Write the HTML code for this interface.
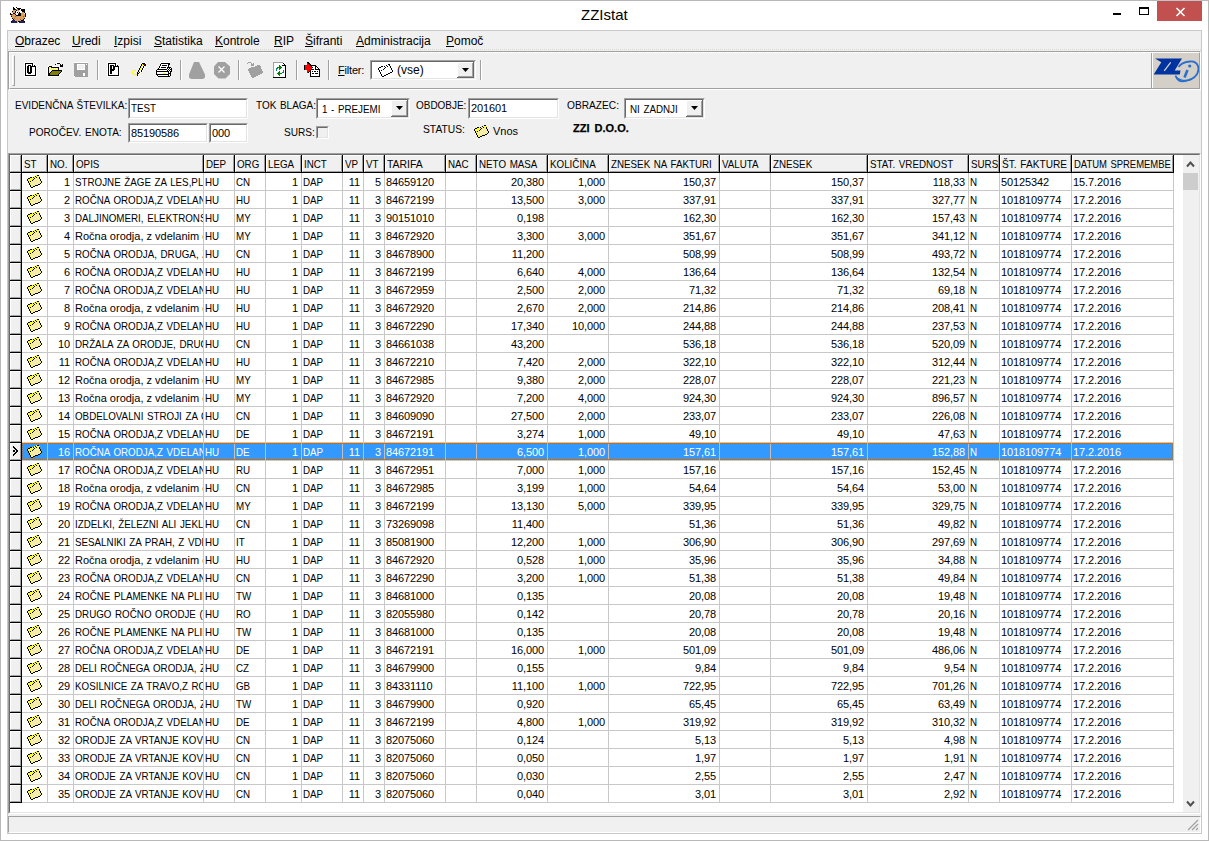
<!DOCTYPE html><html><head><meta charset="utf-8"><title>ZZIstat</title><style>
*{margin:0;padding:0;box-sizing:border-box}
html,body{width:1209px;height:841px;overflow:hidden;background:#fff}
body{position:relative;font-family:"Liberation Sans",sans-serif;font-size:11px;color:#000}
.a{position:absolute}
.t{position:absolute;white-space:nowrap;line-height:13px}
.cell{position:absolute;overflow:hidden;white-space:nowrap;height:17px;line-height:17px;font-size:11px}
.up{}
.sx{display:inline-block;transform:scaleX(.89);transform-origin:0 50%;word-spacing:1px}
.sxr{display:inline-block;transform:scaleX(.89);transform-origin:100% 50%;word-spacing:1px}
.num{letter-spacing:-0.1px}
.hd{position:absolute;background:#f0f0f0;border-left:1px solid #fff;border-top:1px solid #fff;border-right:1px solid #a0a0a0;border-bottom:1px solid #a0a0a0;overflow:hidden;white-space:nowrap;line-height:15px;font-size:11px}
.sunk{position:absolute;background:#fff;border-top:1px solid #a0a0a0;border-left:1px solid #a0a0a0;border-bottom:1px solid #fff;border-right:1px solid #fff}
.sunk>.in{position:absolute;left:0;top:0;right:0;bottom:0;border-top:1px solid #696969;border-left:1px solid #696969;border-bottom:1px solid #e3e3e3;border-right:1px solid #e3e3e3}
.u{text-decoration:underline}
</style></head><body><svg width="0" height="0" style="position:absolute"><defs><symbol id="fold" viewBox="0 0 22 17"><path d="M13 4h1v1h-1zM14 4h1v1h-1zM11 5h1v1h-1zM12 5h1v1h-1zM13 5h1v1h-1zM14 5h1v1h-1zM10 6h1v1h-1zM11 6h1v1h-1zM12 6h1v1h-1zM13 6h1v1h-1zM14 6h1v1h-1zM15 6h1v1h-1zM9 7h1v1h-1zM10 7h1v1h-1zM11 7h1v1h-1zM12 7h1v1h-1zM13 7h1v1h-1zM14 7h1v1h-1zM15 7h1v1h-1zM7 8h1v1h-1zM8 8h1v1h-1zM9 8h1v1h-1zM10 8h1v1h-1zM11 8h1v1h-1zM12 8h1v1h-1zM13 8h1v1h-1zM14 8h1v1h-1zM15 8h1v1h-1zM6 9h1v1h-1zM7 9h1v1h-1zM8 9h1v1h-1zM9 9h1v1h-1zM10 9h1v1h-1zM11 9h1v1h-1zM12 9h1v1h-1zM13 9h1v1h-1zM14 9h1v1h-1zM15 9h1v1h-1zM7 10h1v1h-1zM8 10h1v1h-1zM9 10h1v1h-1zM10 10h1v1h-1zM11 10h1v1h-1zM12 10h1v1h-1zM13 10h1v1h-1zM14 10h1v1h-1zM15 10h1v1h-1zM7 11h1v1h-1zM8 11h1v1h-1zM9 11h1v1h-1zM10 11h1v1h-1zM11 11h1v1h-1zM12 11h1v1h-1zM8 12h1v1h-1zM9 12h1v1h-1zM10 12h1v1h-1z" fill="#f4eca8"/><path d="M12 2h1v1h-1zM10 3h1v1h-1zM12 3h1v1h-1zM13 3h1v1h-1zM14 3h1v1h-1zM15 3h1v1h-1zM8 4h1v1h-1zM10 4h1v1h-1zM11 4h1v1h-1zM6 5h1v1h-1zM7 5h1v1h-1zM8 5h1v1h-1zM9 5h1v1h-1zM4 6h1v1h-1zM5 6h1v1h-1zM6 6h1v1h-1zM7 6h1v1h-1zM8 6h1v1h-1zM4 7h1v1h-1zM5 7h1v1h-1zM6 7h1v1h-1zM7 7h1v1h-1zM5 8h1v1h-1zM16 8h1v1h-1zM5 9h1v1h-1zM16 9h1v1h-1zM6 10h1v1h-1zM6 11h1v1h-1zM13 11h1v1h-1zM7 12h1v1h-1zM7 13h1v1h-1zM8 13h1v1h-1z" fill="#ffff30"/><path d="M13 2h1v1h-1zM14 2h1v1h-1zM11 3h1v1h-1zM6 4h1v1h-1zM7 4h1v1h-1zM9 4h1v1h-1zM12 4h1v1h-1zM15 4h1v1h-1zM4 5h1v1h-1zM5 5h1v1h-1zM10 5h1v1h-1zM15 5h1v1h-1zM3 6h1v1h-1zM9 6h1v1h-1zM16 6h1v1h-1zM3 7h1v1h-1zM8 7h1v1h-1zM16 7h1v1h-1zM4 8h1v1h-1zM6 8h1v1h-1zM17 8h1v1h-1zM4 9h1v1h-1zM17 9h1v1h-1zM5 10h1v1h-1zM16 10h1v1h-1zM5 11h1v1h-1zM14 11h1v1h-1zM15 11h1v1h-1zM6 12h1v1h-1zM11 12h1v1h-1zM12 12h1v1h-1zM13 12h1v1h-1zM6 13h1v1h-1zM9 13h1v1h-1zM10 13h1v1h-1zM7 14h1v1h-1zM8 14h1v1h-1z" fill="#000"/></symbol></defs></svg><div class="a" style="left:0;top:0;width:1209px;height:841px;border:1px solid #b8b8b8"></div><div class="a" style="left:1157px;top:0;width:45px;height:1px;background:#b8c8c8"></div><svg class="a" style="left:9px;top:6px" width="18" height="18" viewBox="0 0 18 18" shape-rendering="crispEdges"><rect x="4" y="1" width="1" height="1" fill="#000"/><rect x="7" y="1" width="1" height="1" fill="#000"/><rect x="4" y="2" width="1" height="1" fill="#000"/><rect x="5" y="2" width="1" height="1" fill="#000"/><rect x="7" y="2" width="1" height="1" fill="#fff"/><rect x="8" y="2" width="1" height="1" fill="#000"/><rect x="9" y="2" width="1" height="1" fill="#000"/><rect x="10" y="2" width="1" height="1" fill="#000"/><rect x="11" y="2" width="1" height="1" fill="#000"/><rect x="4" y="3" width="1" height="1" fill="#000"/><rect x="5" y="3" width="1" height="1" fill="#000"/><rect x="6" y="3" width="1" height="1" fill="#000"/><rect x="7" y="3" width="1" height="1" fill="#d8a060"/><rect x="8" y="3" width="1" height="1" fill="#d8a060"/><rect x="9" y="3" width="1" height="1" fill="#000"/><rect x="10" y="3" width="1" height="1" fill="#000"/><rect x="11" y="3" width="1" height="1" fill="#fff"/><rect x="12" y="3" width="1" height="1" fill="#000"/><rect x="13" y="3" width="1" height="1" fill="#000"/><rect x="14" y="3" width="1" height="1" fill="#000"/><rect x="15" y="3" width="1" height="1" fill="#000"/><rect x="4" y="4" width="1" height="1" fill="#d8a060"/><rect x="5" y="4" width="1" height="1" fill="#d8a060"/><rect x="6" y="4" width="1" height="1" fill="#d8a060"/><rect x="7" y="4" width="1" height="1" fill="#000"/><rect x="8" y="4" width="1" height="1" fill="#d8a060"/><rect x="9" y="4" width="1" height="1" fill="#d8a060"/><rect x="10" y="4" width="1" height="1" fill="#fff"/><rect x="11" y="4" width="1" height="1" fill="#fff"/><rect x="12" y="4" width="1" height="1" fill="#000"/><rect x="13" y="4" width="1" height="1" fill="#000"/><rect x="14" y="4" width="1" height="1" fill="#000"/><rect x="15" y="4" width="1" height="1" fill="#000"/><rect x="3" y="5" width="1" height="1" fill="#000"/><rect x="4" y="5" width="1" height="1" fill="#d8a060"/><rect x="5" y="5" width="1" height="1" fill="#d8a060"/><rect x="6" y="5" width="1" height="1" fill="#000"/><rect x="7" y="5" width="1" height="1" fill="#fff"/><rect x="8" y="5" width="1" height="1" fill="#fff"/><rect x="9" y="5" width="1" height="1" fill="#c8c8c8"/><rect x="10" y="5" width="1" height="1" fill="#fff"/><rect x="11" y="5" width="1" height="1" fill="#fff"/><rect x="13" y="5" width="1" height="1" fill="#000"/><rect x="14" y="5" width="1" height="1" fill="#000"/><rect x="15" y="5" width="1" height="1" fill="#000"/><rect x="3" y="6" width="1" height="1" fill="#d8a060"/><rect x="4" y="6" width="1" height="1" fill="#d8a060"/><rect x="5" y="6" width="1" height="1" fill="#d8a060"/><rect x="6" y="6" width="1" height="1" fill="#000"/><rect x="7" y="6" width="1" height="1" fill="#fff"/><rect x="8" y="6" width="1" height="1" fill="#000"/><rect x="9" y="6" width="1" height="1" fill="#fff"/><rect x="10" y="6" width="1" height="1" fill="#000"/><rect x="11" y="6" width="1" height="1" fill="#fff"/><rect x="12" y="6" width="1" height="1" fill="#fff"/><rect x="13" y="6" width="1" height="1" fill="#d8a060"/><rect x="14" y="6" width="1" height="1" fill="#d8a060"/><rect x="15" y="6" width="1" height="1" fill="#000"/><rect x="1" y="7" width="1" height="1" fill="#000"/><rect x="4" y="7" width="1" height="1" fill="#000"/><rect x="5" y="7" width="1" height="1" fill="#000"/><rect x="6" y="7" width="1" height="1" fill="#d8a060"/><rect x="7" y="7" width="1" height="1" fill="#fff"/><rect x="8" y="7" width="1" height="1" fill="#fff"/><rect x="9" y="7" width="1" height="1" fill="#a85a20"/><rect x="10" y="7" width="1" height="1" fill="#000"/><rect x="11" y="7" width="1" height="1" fill="#000"/><rect x="12" y="7" width="1" height="1" fill="#d8a060"/><rect x="13" y="7" width="1" height="1" fill="#d8a060"/><rect x="14" y="7" width="1" height="1" fill="#d8a060"/><rect x="16" y="7" width="1" height="1" fill="#000"/><rect x="1" y="8" width="1" height="1" fill="#000"/><rect x="2" y="8" width="1" height="1" fill="#000"/><rect x="3" y="8" width="1" height="1" fill="#a85a20"/><rect x="4" y="8" width="1" height="1" fill="#d8a060"/><rect x="5" y="8" width="1" height="1" fill="#d8a060"/><rect x="6" y="8" width="1" height="1" fill="#000"/><rect x="7" y="8" width="1" height="1" fill="#fff"/><rect x="8" y="8" width="1" height="1" fill="#fff"/><rect x="9" y="8" width="1" height="1" fill="#000"/><rect x="10" y="8" width="1" height="1" fill="#000"/><rect x="11" y="8" width="1" height="1" fill="#000"/><rect x="12" y="8" width="1" height="1" fill="#d8a060"/><rect x="13" y="8" width="1" height="1" fill="#d8a060"/><rect x="14" y="8" width="1" height="1" fill="#d8a060"/><rect x="15" y="8" width="1" height="1" fill="#d8a060"/><rect x="16" y="8" width="1" height="1" fill="#000"/><rect x="2" y="9" width="1" height="1" fill="#a85a20"/><rect x="3" y="9" width="1" height="1" fill="#d8a060"/><rect x="4" y="9" width="1" height="1" fill="#d8a060"/><rect x="5" y="9" width="1" height="1" fill="#d8a060"/><rect x="6" y="9" width="1" height="1" fill="#d8a060"/><rect x="7" y="9" width="1" height="1" fill="#000"/><rect x="8" y="9" width="1" height="1" fill="#000"/><rect x="9" y="9" width="1" height="1" fill="#000"/><rect x="10" y="9" width="1" height="1" fill="#000"/><rect x="11" y="9" width="1" height="1" fill="#000"/><rect x="12" y="9" width="1" height="1" fill="#d8a060"/><rect x="13" y="9" width="1" height="1" fill="#d8a060"/><rect x="14" y="9" width="1" height="1" fill="#d8a060"/><rect x="15" y="9" width="1" height="1" fill="#d8a060"/><rect x="16" y="9" width="1" height="1" fill="#000"/><rect x="2" y="10" width="1" height="1" fill="#000"/><rect x="3" y="10" width="1" height="1" fill="#d8a060"/><rect x="4" y="10" width="1" height="1" fill="#d8a060"/><rect x="5" y="10" width="1" height="1" fill="#d8a060"/><rect x="6" y="10" width="1" height="1" fill="#a85a20"/><rect x="7" y="10" width="1" height="1" fill="#d8a060"/><rect x="8" y="10" width="1" height="1" fill="#d8a060"/><rect x="9" y="10" width="1" height="1" fill="#d8a060"/><rect x="10" y="10" width="1" height="1" fill="#d8a060"/><rect x="11" y="10" width="1" height="1" fill="#d8a060"/><rect x="12" y="10" width="1" height="1" fill="#d8a060"/><rect x="13" y="10" width="1" height="1" fill="#d8a060"/><rect x="14" y="10" width="1" height="1" fill="#a85a20"/><rect x="15" y="10" width="1" height="1" fill="#d8a060"/><rect x="16" y="10" width="1" height="1" fill="#000"/><rect x="3" y="11" width="1" height="1" fill="#d8a060"/><rect x="4" y="11" width="1" height="1" fill="#d8a060"/><rect x="5" y="11" width="1" height="1" fill="#d8a060"/><rect x="6" y="11" width="1" height="1" fill="#d8a060"/><rect x="7" y="11" width="1" height="1" fill="#d8a060"/><rect x="8" y="11" width="1" height="1" fill="#d8a060"/><rect x="9" y="11" width="1" height="1" fill="#d8a060"/><rect x="10" y="11" width="1" height="1" fill="#d8a060"/><rect x="11" y="11" width="1" height="1" fill="#d8a060"/><rect x="12" y="11" width="1" height="1" fill="#d8a060"/><rect x="13" y="11" width="1" height="1" fill="#d8a060"/><rect x="14" y="11" width="1" height="1" fill="#d8a060"/><rect x="15" y="11" width="1" height="1" fill="#d8a060"/><rect x="3" y="12" width="1" height="1" fill="#000"/><rect x="4" y="12" width="1" height="1" fill="#d8a060"/><rect x="5" y="12" width="1" height="1" fill="#a85a20"/><rect x="6" y="12" width="1" height="1" fill="#d8a060"/><rect x="7" y="12" width="1" height="1" fill="#d8a060"/><rect x="8" y="12" width="1" height="1" fill="#d8a060"/><rect x="9" y="12" width="1" height="1" fill="#d8a060"/><rect x="10" y="12" width="1" height="1" fill="#d8a060"/><rect x="11" y="12" width="1" height="1" fill="#d8a060"/><rect x="12" y="12" width="1" height="1" fill="#d8a060"/><rect x="13" y="12" width="1" height="1" fill="#d8a060"/><rect x="14" y="12" width="1" height="1" fill="#d8a060"/><rect x="15" y="12" width="1" height="1" fill="#000"/><rect x="4" y="13" width="1" height="1" fill="#000"/><rect x="5" y="13" width="1" height="1" fill="#d8a060"/><rect x="6" y="13" width="1" height="1" fill="#d8a060"/><rect x="7" y="13" width="1" height="1" fill="#d8a060"/><rect x="8" y="13" width="1" height="1" fill="#d8a060"/><rect x="9" y="13" width="1" height="1" fill="#d8a060"/><rect x="10" y="13" width="1" height="1" fill="#d8a060"/><rect x="11" y="13" width="1" height="1" fill="#a85a20"/><rect x="12" y="13" width="1" height="1" fill="#d8a060"/><rect x="13" y="13" width="1" height="1" fill="#d8a060"/><rect x="14" y="13" width="1" height="1" fill="#000"/><rect x="3" y="14" width="1" height="1" fill="#20205a"/><rect x="4" y="14" width="1" height="1" fill="#20205a"/><rect x="5" y="14" width="1" height="1" fill="#20205a"/><rect x="6" y="14" width="1" height="1" fill="#d8a060"/><rect x="7" y="14" width="1" height="1" fill="#d8a060"/><rect x="8" y="14" width="1" height="1" fill="#d8a060"/><rect x="9" y="14" width="1" height="1" fill="#d8a060"/><rect x="10" y="14" width="1" height="1" fill="#d8a060"/><rect x="11" y="14" width="1" height="1" fill="#d8a060"/><rect x="12" y="14" width="1" height="1" fill="#000"/><rect x="13" y="14" width="1" height="1" fill="#000"/><rect x="14" y="14" width="1" height="1" fill="#20205a"/><rect x="2" y="15" width="1" height="1" fill="#000"/><rect x="3" y="15" width="1" height="1" fill="#20205a"/><rect x="4" y="15" width="1" height="1" fill="#20205a"/><rect x="5" y="15" width="1" height="1" fill="#20205a"/><rect x="6" y="15" width="1" height="1" fill="#20205a"/><rect x="7" y="15" width="1" height="1" fill="#20205a"/><rect x="8" y="15" width="1" height="1" fill="#f0b050"/><rect x="9" y="15" width="1" height="1" fill="#000"/><rect x="10" y="15" width="1" height="1" fill="#000"/><rect x="11" y="15" width="1" height="1" fill="#20205a"/><rect x="12" y="15" width="1" height="1" fill="#20205a"/><rect x="13" y="15" width="1" height="1" fill="#20205a"/><rect x="14" y="15" width="1" height="1" fill="#20205a"/><rect x="15" y="15" width="1" height="1" fill="#000"/><rect x="2" y="16" width="1" height="1" fill="#20205a"/><rect x="3" y="16" width="1" height="1" fill="#20205a"/><rect x="4" y="16" width="1" height="1" fill="#20205a"/><rect x="5" y="16" width="1" height="1" fill="#20205a"/><rect x="6" y="16" width="1" height="1" fill="#20205a"/><rect x="7" y="16" width="1" height="1" fill="#20205a"/><rect x="8" y="16" width="1" height="1" fill="#f0b050"/><rect x="10" y="16" width="1" height="1" fill="#20205a"/><rect x="11" y="16" width="1" height="1" fill="#20205a"/><rect x="12" y="16" width="1" height="1" fill="#20205a"/><rect x="13" y="16" width="1" height="1" fill="#20205a"/><rect x="14" y="16" width="1" height="1" fill="#20205a"/><rect x="15" y="16" width="1" height="1" fill="#20205a"/></svg><div class="t" style="left:581px;top:6px;font-size:15px;line-height:18px;color:#000">ZZIstat</div><div class="a" style="left:1113px;top:13px;width:8px;height:2px;background:#000"></div><div class="a" style="left:1139px;top:7px;width:10px;height:8px;border:1px solid #000;border-top-width:2px"></div><div class="a" style="left:1157px;top:1px;width:45px;height:20px;background:#c1504f"></div><svg class="a" style="left:1175px;top:7px" width="11" height="10" viewBox="0 0 11 10"><path d="M1.5 1L9.5 9M9.5 1L1.5 9" stroke="#fff" stroke-width="1.6"/></svg><div class="a" style="left:7px;top:30px;width:1195px;height:804px;background:#f0f0f0;border:1px solid #c8c8c8"></div><div class="t" style="left:15px;top:34px;font-size:12px;line-height:14px"><span class="u">O</span>brazec</div><div class="t" style="left:72px;top:34px;font-size:12px;line-height:14px"><span class="u">U</span>redi</div><div class="t" style="left:114px;top:34px;font-size:12px;line-height:14px"><span class="u">I</span>zpisi</div><div class="t" style="left:154px;top:34px;font-size:12px;line-height:14px"><span class="u">S</span>tatistika</div><div class="t" style="left:215px;top:34px;font-size:12px;line-height:14px"><span class="u">K</span>ontrole</div><div class="t" style="left:274px;top:34px;font-size:12px;line-height:14px"><span class="u">R</span>IP</div><div class="t" style="left:305px;top:34px;font-size:12px;line-height:14px"><span class="u">Š</span>ifranti</div><div class="t" style="left:356px;top:34px;font-size:12px;line-height:14px"><span class="u">A</span>dministracija</div><div class="t" style="left:446px;top:34px;font-size:12px;line-height:14px"><span class="u">P</span>omoč</div><div class="a" style="left:8px;top:49px;width:1193px;height:1px;border-top:1px dotted #d8d8d0"></div><div class="a" style="left:8px;top:51px;width:1193px;height:39px;border-top:1px solid #a0a0a0;border-left:1px solid #a0a0a0;border-bottom:1px solid #fff;border-right:1px solid #fff"></div><div class="a" style="left:9px;top:52px;width:1191px;height:37px;border-top:1px solid #fff;border-left:1px solid #fff;border-bottom:1px solid #a0a0a0;border-right:1px solid #a0a0a0"></div><div class="a" style="left:12px;top:55px;width:3px;height:31px;border-left:1px solid #fff;border-top:1px solid #fff;border-right:1px solid #a0a0a0;border-bottom:1px solid #a0a0a0"></div><div class="a" style="left:97px;top:60px;width:1px;height:20px;background:#a0a0a0;box-shadow:1px 0 0 #fff"></div><div class="a" style="left:180px;top:60px;width:1px;height:20px;background:#a0a0a0;box-shadow:1px 0 0 #fff"></div><div class="a" style="left:238px;top:60px;width:1px;height:20px;background:#a0a0a0;box-shadow:1px 0 0 #fff"></div><div class="a" style="left:296px;top:60px;width:1px;height:20px;background:#a0a0a0;box-shadow:1px 0 0 #fff"></div><div class="a" style="left:328px;top:60px;width:1px;height:20px;background:#a0a0a0;box-shadow:1px 0 0 #fff"></div><div class="a" style="left:480px;top:60px;width:1px;height:20px;background:#a0a0a0;box-shadow:1px 0 0 #fff"></div><svg class="a" style="left:23px;top:60px" width="16" height="17" viewBox="0 0 16 17" shape-rendering="crispEdges"><path d="M2 3h1v1h-1zM3 3h1v1h-1zM4 3h1v1h-1zM5 3h1v1h-1zM6 3h1v1h-1zM7 3h1v1h-1zM8 3h1v1h-1zM9 3h1v1h-1zM2 4h1v1h-1zM9 4h1v1h-1zM2 5h1v1h-1zM5 5h1v1h-1zM6 5h1v1h-1zM7 5h1v1h-1zM9 5h1v1h-1zM11 5h1v1h-1zM2 6h1v1h-1zM4 6h1v1h-1zM5 6h1v1h-1zM7 6h1v1h-1zM8 6h1v1h-1zM9 6h1v1h-1zM10 6h1v1h-1zM11 6h1v1h-1zM12 6h1v1h-1zM2 7h1v1h-1zM4 7h1v1h-1zM5 7h1v1h-1zM7 7h1v1h-1zM8 7h1v1h-1zM12 7h1v1h-1zM2 8h1v1h-1zM4 8h1v1h-1zM5 8h1v1h-1zM7 8h1v1h-1zM8 8h1v1h-1zM12 8h1v1h-1zM2 9h1v1h-1zM4 9h1v1h-1zM5 9h1v1h-1zM7 9h1v1h-1zM8 9h1v1h-1zM12 9h1v1h-1zM2 10h1v1h-1zM4 10h1v1h-1zM5 10h1v1h-1zM7 10h1v1h-1zM8 10h1v1h-1zM12 10h1v1h-1zM2 11h1v1h-1zM4 11h1v1h-1zM5 11h1v1h-1zM7 11h1v1h-1zM8 11h1v1h-1zM12 11h1v1h-1zM2 12h1v1h-1zM4 12h1v1h-1zM5 12h1v1h-1zM6 12h1v1h-1zM7 12h1v1h-1zM8 12h1v1h-1zM12 12h1v1h-1zM2 13h1v1h-1zM5 13h1v1h-1zM6 13h1v1h-1zM7 13h1v1h-1zM12 13h1v1h-1zM2 14h1v1h-1zM12 14h1v1h-1zM2 15h1v1h-1zM3 15h1v1h-1zM4 15h1v1h-1zM5 15h1v1h-1zM6 15h1v1h-1zM7 15h1v1h-1zM8 15h1v1h-1zM9 15h1v1h-1zM10 15h1v1h-1zM11 15h1v1h-1zM12 15h1v1h-1z" fill="#000"/><path d="M1 2h1v1h-1zM2 2h1v1h-1zM3 2h1v1h-1zM4 2h1v1h-1zM5 2h1v1h-1zM6 2h1v1h-1zM7 2h1v1h-1zM8 2h1v1h-1zM9 2h1v1h-1zM1 3h1v1h-1zM10 3h1v1h-1zM1 4h1v1h-1zM3 4h1v1h-1zM4 4h1v1h-1zM5 4h1v1h-1zM6 4h1v1h-1zM7 4h1v1h-1zM8 4h1v1h-1zM10 4h1v1h-1zM11 4h1v1h-1zM1 5h1v1h-1zM3 5h1v1h-1zM4 5h1v1h-1zM8 5h1v1h-1zM10 5h1v1h-1zM12 5h1v1h-1zM1 6h1v1h-1zM3 6h1v1h-1zM6 6h1v1h-1zM13 6h1v1h-1zM1 7h1v1h-1zM3 7h1v1h-1zM6 7h1v1h-1zM9 7h1v1h-1zM10 7h1v1h-1zM11 7h1v1h-1zM13 7h1v1h-1zM1 8h1v1h-1zM3 8h1v1h-1zM6 8h1v1h-1zM9 8h1v1h-1zM10 8h1v1h-1zM11 8h1v1h-1zM13 8h1v1h-1zM1 9h1v1h-1zM3 9h1v1h-1zM6 9h1v1h-1zM9 9h1v1h-1zM10 9h1v1h-1zM11 9h1v1h-1zM13 9h1v1h-1zM1 10h1v1h-1zM3 10h1v1h-1zM6 10h1v1h-1zM9 10h1v1h-1zM10 10h1v1h-1zM11 10h1v1h-1zM13 10h1v1h-1zM1 11h1v1h-1zM3 11h1v1h-1zM6 11h1v1h-1zM9 11h1v1h-1zM10 11h1v1h-1zM11 11h1v1h-1zM13 11h1v1h-1zM1 12h1v1h-1zM3 12h1v1h-1zM9 12h1v1h-1zM10 12h1v1h-1zM11 12h1v1h-1zM13 12h1v1h-1zM1 13h1v1h-1zM3 13h1v1h-1zM4 13h1v1h-1zM8 13h1v1h-1zM9 13h1v1h-1zM10 13h1v1h-1zM11 13h1v1h-1zM13 13h1v1h-1zM1 14h1v1h-1zM3 14h1v1h-1zM4 14h1v1h-1zM5 14h1v1h-1zM6 14h1v1h-1zM7 14h1v1h-1zM8 14h1v1h-1zM9 14h1v1h-1zM10 14h1v1h-1zM11 14h1v1h-1zM13 14h1v1h-1zM1 15h1v1h-1zM13 15h1v1h-1zM1 16h1v1h-1zM2 16h1v1h-1zM3 16h1v1h-1zM4 16h1v1h-1zM5 16h1v1h-1zM6 16h1v1h-1zM7 16h1v1h-1zM8 16h1v1h-1zM9 16h1v1h-1zM10 16h1v1h-1zM11 16h1v1h-1zM12 16h1v1h-1zM13 16h1v1h-1z" fill="#fff"/></svg><svg class="a" style="left:46px;top:60px" width="18" height="17" viewBox="0 0 18 17" shape-rendering="crispEdges"><path d="M11 3h1v1h-1zM12 3h1v1h-1zM13 3h1v1h-1zM9 4h1v1h-1zM14 4h1v1h-1zM16 4h1v1h-1zM14 5h1v1h-1zM15 5h1v1h-1zM16 5h1v1h-1zM3 6h1v1h-1zM4 6h1v1h-1zM5 6h1v1h-1zM14 6h1v1h-1zM15 6h1v1h-1zM16 6h1v1h-1zM2 7h1v1h-1zM5 7h1v1h-1zM6 7h1v1h-1zM7 7h1v1h-1zM8 7h1v1h-1zM9 7h1v1h-1zM10 7h1v1h-1zM11 7h1v1h-1zM12 7h1v1h-1zM2 8h1v1h-1zM12 8h1v1h-1zM2 9h1v1h-1zM12 9h1v1h-1zM2 10h1v1h-1zM6 10h1v1h-1zM7 10h1v1h-1zM8 10h1v1h-1zM9 10h1v1h-1zM10 10h1v1h-1zM11 10h1v1h-1zM12 10h1v1h-1zM13 10h1v1h-1zM14 10h1v1h-1zM15 10h1v1h-1zM2 11h1v1h-1zM5 11h1v1h-1zM15 11h1v1h-1zM2 12h1v1h-1zM4 12h1v1h-1zM14 12h1v1h-1zM2 13h1v1h-1zM3 13h1v1h-1zM13 13h1v1h-1zM2 14h1v1h-1zM3 14h1v1h-1zM12 14h1v1h-1zM2 15h1v1h-1zM3 15h1v1h-1zM4 15h1v1h-1zM5 15h1v1h-1zM6 15h1v1h-1zM7 15h1v1h-1zM8 15h1v1h-1zM9 15h1v1h-1zM10 15h1v1h-1zM11 15h1v1h-1zM12 15h1v1h-1z" fill="#000"/><path d="M10 2h1v1h-1zM11 2h1v1h-1zM12 2h1v1h-1zM13 2h1v1h-1zM10 3h1v1h-1zM14 3h1v1h-1zM10 4h1v1h-1zM15 4h1v1h-1zM2 5h1v1h-1zM3 5h1v1h-1zM4 5h1v1h-1zM2 6h1v1h-1zM6 6h1v1h-1zM7 6h1v1h-1zM8 6h1v1h-1zM9 6h1v1h-1zM10 6h1v1h-1zM11 6h1v1h-1zM1 7h1v1h-1zM13 7h1v1h-1zM1 8h1v1h-1zM4 8h1v1h-1zM6 8h1v1h-1zM8 8h1v1h-1zM10 8h1v1h-1zM13 8h1v1h-1zM1 9h1v1h-1zM3 9h1v1h-1zM5 9h1v1h-1zM7 9h1v1h-1zM9 9h1v1h-1zM11 9h1v1h-1zM13 9h1v1h-1zM1 10h1v1h-1zM4 10h1v1h-1zM16 10h1v1h-1zM1 11h1v1h-1zM4 11h1v1h-1zM16 11h1v1h-1zM1 12h1v1h-1zM15 12h1v1h-1zM1 13h1v1h-1zM14 13h1v1h-1zM1 14h1v1h-1zM13 14h1v1h-1zM1 15h1v1h-1zM13 15h1v1h-1zM2 16h1v1h-1zM3 16h1v1h-1zM4 16h1v1h-1zM5 16h1v1h-1zM6 16h1v1h-1zM7 16h1v1h-1zM8 16h1v1h-1zM9 16h1v1h-1zM10 16h1v1h-1zM11 16h1v1h-1zM12 16h1v1h-1z" fill="#fff"/><path d="M3 7h1v1h-1zM4 7h1v1h-1zM3 8h1v1h-1zM5 8h1v1h-1zM7 8h1v1h-1zM9 8h1v1h-1zM11 8h1v1h-1zM4 9h1v1h-1zM6 9h1v1h-1zM8 9h1v1h-1zM10 9h1v1h-1zM3 10h1v1h-1zM5 10h1v1h-1zM3 11h1v1h-1zM3 12h1v1h-1z" fill="#ffff00"/><path d="M6 11h1v1h-1zM7 11h1v1h-1zM8 11h1v1h-1zM9 11h1v1h-1zM10 11h1v1h-1zM11 11h1v1h-1zM12 11h1v1h-1zM13 11h1v1h-1zM14 11h1v1h-1zM5 12h1v1h-1zM6 12h1v1h-1zM7 12h1v1h-1zM8 12h1v1h-1zM9 12h1v1h-1zM10 12h1v1h-1zM11 12h1v1h-1zM12 12h1v1h-1zM13 12h1v1h-1zM4 13h1v1h-1zM5 13h1v1h-1zM6 13h1v1h-1zM7 13h1v1h-1zM8 13h1v1h-1zM9 13h1v1h-1zM10 13h1v1h-1zM11 13h1v1h-1zM12 13h1v1h-1zM4 14h1v1h-1zM5 14h1v1h-1zM6 14h1v1h-1zM7 14h1v1h-1zM8 14h1v1h-1zM9 14h1v1h-1zM10 14h1v1h-1zM11 14h1v1h-1z" fill="#808000"/></svg><svg class="a" style="left:72px;top:60px" width="18" height="17" viewBox="0 0 18 17" shape-rendering="crispEdges"><path d="M2 2h1v1h-1zM3 2h1v1h-1zM4 2h1v1h-1zM5 2h1v1h-1zM6 2h1v1h-1zM7 2h1v1h-1zM8 2h1v1h-1zM9 2h1v1h-1zM10 2h1v1h-1zM11 2h1v1h-1zM12 2h1v1h-1zM13 2h1v1h-1zM14 2h1v1h-1zM15 2h1v1h-1zM5 4h1v1h-1zM6 4h1v1h-1zM7 4h1v1h-1zM8 4h1v1h-1zM9 4h1v1h-1zM10 4h1v1h-1zM11 4h1v1h-1zM12 4h1v1h-1zM14 4h1v1h-1zM5 5h1v1h-1zM12 5h1v1h-1zM5 6h1v1h-1zM12 6h1v1h-1zM5 7h1v1h-1zM12 7h1v1h-1zM5 8h1v1h-1zM12 8h1v1h-1zM5 9h1v1h-1zM6 9h1v1h-1zM7 9h1v1h-1zM8 9h1v1h-1zM9 9h1v1h-1zM10 9h1v1h-1zM11 9h1v1h-1zM12 9h1v1h-1zM11 13h1v1h-1zM12 13h1v1h-1zM11 14h1v1h-1zM12 14h1v1h-1zM11 15h1v1h-1zM12 15h1v1h-1zM2 16h1v1h-1z" fill="#fff"/><path d="M2 3h1v1h-1zM3 3h1v1h-1zM4 3h1v1h-1zM5 3h1v1h-1zM6 3h1v1h-1zM7 3h1v1h-1zM8 3h1v1h-1zM9 3h1v1h-1zM10 3h1v1h-1zM11 3h1v1h-1zM12 3h1v1h-1zM13 3h1v1h-1zM14 3h1v1h-1zM15 3h1v1h-1zM2 4h1v1h-1zM3 4h1v1h-1zM4 4h1v1h-1zM13 4h1v1h-1zM15 4h1v1h-1zM2 5h1v1h-1zM3 5h1v1h-1zM4 5h1v1h-1zM13 5h1v1h-1zM14 5h1v1h-1zM15 5h1v1h-1zM2 6h1v1h-1zM3 6h1v1h-1zM4 6h1v1h-1zM13 6h1v1h-1zM14 6h1v1h-1zM15 6h1v1h-1zM2 7h1v1h-1zM3 7h1v1h-1zM4 7h1v1h-1zM13 7h1v1h-1zM14 7h1v1h-1zM15 7h1v1h-1zM2 8h1v1h-1zM3 8h1v1h-1zM4 8h1v1h-1zM13 8h1v1h-1zM14 8h1v1h-1zM15 8h1v1h-1zM2 9h1v1h-1zM3 9h1v1h-1zM4 9h1v1h-1zM13 9h1v1h-1zM14 9h1v1h-1zM15 9h1v1h-1zM2 10h1v1h-1zM3 10h1v1h-1zM4 10h1v1h-1zM5 10h1v1h-1zM6 10h1v1h-1zM7 10h1v1h-1zM8 10h1v1h-1zM9 10h1v1h-1zM10 10h1v1h-1zM11 10h1v1h-1zM12 10h1v1h-1zM13 10h1v1h-1zM14 10h1v1h-1zM15 10h1v1h-1zM2 11h1v1h-1zM3 11h1v1h-1zM4 11h1v1h-1zM5 11h1v1h-1zM6 11h1v1h-1zM7 11h1v1h-1zM8 11h1v1h-1zM9 11h1v1h-1zM10 11h1v1h-1zM11 11h1v1h-1zM12 11h1v1h-1zM13 11h1v1h-1zM14 11h1v1h-1zM15 11h1v1h-1zM2 12h1v1h-1zM3 12h1v1h-1zM4 12h1v1h-1zM5 12h1v1h-1zM6 12h1v1h-1zM7 12h1v1h-1zM8 12h1v1h-1zM9 12h1v1h-1zM10 12h1v1h-1zM11 12h1v1h-1zM12 12h1v1h-1zM13 12h1v1h-1zM14 12h1v1h-1zM15 12h1v1h-1zM2 13h1v1h-1zM3 13h1v1h-1zM4 13h1v1h-1zM5 13h1v1h-1zM6 13h1v1h-1zM7 13h1v1h-1zM8 13h1v1h-1zM9 13h1v1h-1zM10 13h1v1h-1zM13 13h1v1h-1zM14 13h1v1h-1zM15 13h1v1h-1zM2 14h1v1h-1zM3 14h1v1h-1zM4 14h1v1h-1zM5 14h1v1h-1zM6 14h1v1h-1zM7 14h1v1h-1zM8 14h1v1h-1zM9 14h1v1h-1zM10 14h1v1h-1zM13 14h1v1h-1zM14 14h1v1h-1zM15 14h1v1h-1zM2 15h1v1h-1zM3 15h1v1h-1zM4 15h1v1h-1zM5 15h1v1h-1zM6 15h1v1h-1zM7 15h1v1h-1zM8 15h1v1h-1zM9 15h1v1h-1zM10 15h1v1h-1zM13 15h1v1h-1zM14 15h1v1h-1zM15 15h1v1h-1zM3 16h1v1h-1zM4 16h1v1h-1zM5 16h1v1h-1zM6 16h1v1h-1zM7 16h1v1h-1zM8 16h1v1h-1zM9 16h1v1h-1zM10 16h1v1h-1zM11 16h1v1h-1zM12 16h1v1h-1zM13 16h1v1h-1zM14 16h1v1h-1zM15 16h1v1h-1z" fill="#a0a0a0"/><path d="M6 5h1v1h-1zM7 5h1v1h-1zM8 5h1v1h-1zM9 5h1v1h-1zM10 5h1v1h-1zM11 5h1v1h-1zM6 6h1v1h-1zM7 6h1v1h-1zM8 6h1v1h-1zM9 6h1v1h-1zM10 6h1v1h-1zM11 6h1v1h-1zM6 7h1v1h-1zM7 7h1v1h-1zM8 7h1v1h-1zM9 7h1v1h-1zM10 7h1v1h-1zM11 7h1v1h-1zM6 8h1v1h-1zM7 8h1v1h-1zM8 8h1v1h-1zM9 8h1v1h-1zM10 8h1v1h-1zM11 8h1v1h-1z" fill="#f0f0f0"/></svg><svg class="a" style="left:106px;top:60px" width="16" height="17" viewBox="0 0 16 17" shape-rendering="crispEdges"><path d="M2 3h1v1h-1zM3 3h1v1h-1zM4 3h1v1h-1zM5 3h1v1h-1zM6 3h1v1h-1zM7 3h1v1h-1zM8 3h1v1h-1zM9 3h1v1h-1zM2 4h1v1h-1zM9 4h1v1h-1zM2 5h1v1h-1zM4 5h1v1h-1zM5 5h1v1h-1zM6 5h1v1h-1zM7 5h1v1h-1zM9 5h1v1h-1zM11 5h1v1h-1zM2 6h1v1h-1zM4 6h1v1h-1zM5 6h1v1h-1zM7 6h1v1h-1zM8 6h1v1h-1zM9 6h1v1h-1zM10 6h1v1h-1zM11 6h1v1h-1zM12 6h1v1h-1zM2 7h1v1h-1zM4 7h1v1h-1zM5 7h1v1h-1zM7 7h1v1h-1zM8 7h1v1h-1zM12 7h1v1h-1zM2 8h1v1h-1zM4 8h1v1h-1zM5 8h1v1h-1zM7 8h1v1h-1zM8 8h1v1h-1zM12 8h1v1h-1zM2 9h1v1h-1zM4 9h1v1h-1zM5 9h1v1h-1zM6 9h1v1h-1zM7 9h1v1h-1zM8 9h1v1h-1zM12 9h1v1h-1zM2 10h1v1h-1zM4 10h1v1h-1zM5 10h1v1h-1zM6 10h1v1h-1zM7 10h1v1h-1zM12 10h1v1h-1zM2 11h1v1h-1zM4 11h1v1h-1zM5 11h1v1h-1zM12 11h1v1h-1zM2 12h1v1h-1zM4 12h1v1h-1zM5 12h1v1h-1zM12 12h1v1h-1zM2 13h1v1h-1zM4 13h1v1h-1zM5 13h1v1h-1zM12 13h1v1h-1zM2 14h1v1h-1zM12 14h1v1h-1zM2 15h1v1h-1zM3 15h1v1h-1zM4 15h1v1h-1zM5 15h1v1h-1zM6 15h1v1h-1zM7 15h1v1h-1zM8 15h1v1h-1zM9 15h1v1h-1zM10 15h1v1h-1zM11 15h1v1h-1zM12 15h1v1h-1z" fill="#000"/><path d="M1 2h1v1h-1zM2 2h1v1h-1zM3 2h1v1h-1zM4 2h1v1h-1zM5 2h1v1h-1zM6 2h1v1h-1zM7 2h1v1h-1zM8 2h1v1h-1zM9 2h1v1h-1zM1 3h1v1h-1zM10 3h1v1h-1zM1 4h1v1h-1zM3 4h1v1h-1zM4 4h1v1h-1zM5 4h1v1h-1zM6 4h1v1h-1zM7 4h1v1h-1zM8 4h1v1h-1zM10 4h1v1h-1zM11 4h1v1h-1zM1 5h1v1h-1zM3 5h1v1h-1zM8 5h1v1h-1zM10 5h1v1h-1zM12 5h1v1h-1zM1 6h1v1h-1zM3 6h1v1h-1zM6 6h1v1h-1zM13 6h1v1h-1zM1 7h1v1h-1zM3 7h1v1h-1zM6 7h1v1h-1zM9 7h1v1h-1zM10 7h1v1h-1zM11 7h1v1h-1zM13 7h1v1h-1zM1 8h1v1h-1zM3 8h1v1h-1zM6 8h1v1h-1zM9 8h1v1h-1zM10 8h1v1h-1zM11 8h1v1h-1zM13 8h1v1h-1zM1 9h1v1h-1zM3 9h1v1h-1zM9 9h1v1h-1zM10 9h1v1h-1zM11 9h1v1h-1zM13 9h1v1h-1zM1 10h1v1h-1zM3 10h1v1h-1zM8 10h1v1h-1zM9 10h1v1h-1zM10 10h1v1h-1zM11 10h1v1h-1zM13 10h1v1h-1zM1 11h1v1h-1zM3 11h1v1h-1zM6 11h1v1h-1zM7 11h1v1h-1zM8 11h1v1h-1zM9 11h1v1h-1zM10 11h1v1h-1zM11 11h1v1h-1zM13 11h1v1h-1zM1 12h1v1h-1zM3 12h1v1h-1zM6 12h1v1h-1zM7 12h1v1h-1zM8 12h1v1h-1zM9 12h1v1h-1zM10 12h1v1h-1zM11 12h1v1h-1zM13 12h1v1h-1zM1 13h1v1h-1zM3 13h1v1h-1zM6 13h1v1h-1zM7 13h1v1h-1zM8 13h1v1h-1zM9 13h1v1h-1zM10 13h1v1h-1zM11 13h1v1h-1zM13 13h1v1h-1zM1 14h1v1h-1zM3 14h1v1h-1zM4 14h1v1h-1zM5 14h1v1h-1zM6 14h1v1h-1zM7 14h1v1h-1zM8 14h1v1h-1zM9 14h1v1h-1zM10 14h1v1h-1zM11 14h1v1h-1zM13 14h1v1h-1zM1 15h1v1h-1zM13 15h1v1h-1zM1 16h1v1h-1zM2 16h1v1h-1zM3 16h1v1h-1zM4 16h1v1h-1zM5 16h1v1h-1zM6 16h1v1h-1zM7 16h1v1h-1zM8 16h1v1h-1zM9 16h1v1h-1zM10 16h1v1h-1zM11 16h1v1h-1zM12 16h1v1h-1zM13 16h1v1h-1z" fill="#fff"/></svg><svg class="a" style="left:130px;top:60px" width="19" height="16" viewBox="0 0 19 16" shape-rendering="crispEdges"><path d="M12 3h1v1h-1zM13 3h1v1h-1zM14 3h1v1h-1zM11 4h1v1h-1zM15 4h1v1h-1zM11 5h1v1h-1zM14 5h1v1h-1zM15 5h1v1h-1zM10 6h1v1h-1zM13 6h1v1h-1zM10 7h1v1h-1zM13 7h1v1h-1zM9 8h1v1h-1zM12 8h1v1h-1zM9 9h1v1h-1zM12 9h1v1h-1zM8 10h1v1h-1zM11 10h1v1h-1zM8 11h1v1h-1zM11 11h1v1h-1zM7 12h1v1h-1zM9 12h1v1h-1zM7 13h1v1h-1zM8 13h1v1h-1zM7 14h1v1h-1zM7 15h1v1h-1z" fill="#000"/><path d="M12 2h1v1h-1zM13 2h1v1h-1zM14 2h1v1h-1zM15 2h1v1h-1zM11 3h1v1h-1zM15 3h1v1h-1zM10 4h1v1h-1zM16 4h1v1h-1zM10 5h1v1h-1zM13 5h1v1h-1zM16 5h1v1h-1zM9 6h1v1h-1zM12 6h1v1h-1zM14 6h1v1h-1zM9 7h1v1h-1zM12 7h1v1h-1zM14 7h1v1h-1zM11 8h1v1h-1zM13 8h1v1h-1zM8 9h1v1h-1zM11 9h1v1h-1zM13 9h1v1h-1zM10 10h1v1h-1zM12 10h1v1h-1zM10 11h1v1h-1zM12 11h1v1h-1zM10 12h1v1h-1zM9 13h1v1h-1zM8 14h1v1h-1z" fill="#fff"/><path d="M12 4h1v1h-1zM12 5h1v1h-1zM11 6h1v1h-1zM11 7h1v1h-1zM10 8h1v1h-1zM10 9h1v1h-1zM3 10h1v1h-1zM4 10h1v1h-1zM5 10h1v1h-1zM9 10h1v1h-1zM2 11h1v1h-1zM9 11h1v1h-1zM2 12h1v1h-1zM8 12h1v1h-1zM2 13h1v1h-1zM3 14h1v1h-1zM4 14h1v1h-1zM5 14h1v1h-1zM6 14h1v1h-1z" fill="#ffff00"/><path d="M13 4h1v1h-1zM14 4h1v1h-1z" fill="#800000"/></svg><svg class="a" style="left:154px;top:60px" width="20" height="17" viewBox="0 0 20 17" shape-rendering="crispEdges"><path d="M7 3h1v1h-1zM8 3h1v1h-1zM9 3h1v1h-1zM10 3h1v1h-1zM11 3h1v1h-1zM12 3h1v1h-1zM13 3h1v1h-1zM14 3h1v1h-1zM15 3h1v1h-1zM6 4h1v1h-1zM14 4h1v1h-1zM15 4h1v1h-1zM6 5h1v1h-1zM8 5h1v1h-1zM9 5h1v1h-1zM10 5h1v1h-1zM11 5h1v1h-1zM12 5h1v1h-1zM14 5h1v1h-1zM5 6h1v1h-1zM14 6h1v1h-1zM5 7h1v1h-1zM7 7h1v1h-1zM8 7h1v1h-1zM9 7h1v1h-1zM10 7h1v1h-1zM11 7h1v1h-1zM13 7h1v1h-1zM14 7h1v1h-1zM15 7h1v1h-1zM16 7h1v1h-1zM4 8h1v1h-1zM13 8h1v1h-1zM15 8h1v1h-1zM17 8h1v1h-1zM3 9h1v1h-1zM4 9h1v1h-1zM5 9h1v1h-1zM6 9h1v1h-1zM7 9h1v1h-1zM8 9h1v1h-1zM9 9h1v1h-1zM10 9h1v1h-1zM11 9h1v1h-1zM12 9h1v1h-1zM14 9h1v1h-1zM16 9h1v1h-1zM17 9h1v1h-1zM2 10h1v1h-1zM13 10h1v1h-1zM15 10h1v1h-1zM17 10h1v1h-1zM2 11h1v1h-1zM3 11h1v1h-1zM4 11h1v1h-1zM5 11h1v1h-1zM6 11h1v1h-1zM7 11h1v1h-1zM8 11h1v1h-1zM9 11h1v1h-1zM10 11h1v1h-1zM11 11h1v1h-1zM12 11h1v1h-1zM13 11h1v1h-1zM14 11h1v1h-1zM16 11h1v1h-1zM17 11h1v1h-1zM2 12h1v1h-1zM14 12h1v1h-1zM16 12h1v1h-1zM2 13h1v1h-1zM14 13h1v1h-1zM15 13h1v1h-1zM16 13h1v1h-1zM2 14h1v1h-1zM3 14h1v1h-1zM4 14h1v1h-1zM5 14h1v1h-1zM6 14h1v1h-1zM7 14h1v1h-1zM8 14h1v1h-1zM9 14h1v1h-1zM10 14h1v1h-1zM11 14h1v1h-1zM12 14h1v1h-1zM13 14h1v1h-1zM14 14h1v1h-1zM16 14h1v1h-1zM3 15h1v1h-1zM14 15h1v1h-1zM16 15h1v1h-1zM4 16h1v1h-1zM5 16h1v1h-1zM6 16h1v1h-1zM7 16h1v1h-1zM8 16h1v1h-1zM9 16h1v1h-1zM10 16h1v1h-1zM11 16h1v1h-1zM12 16h1v1h-1zM13 16h1v1h-1zM14 16h1v1h-1zM15 16h1v1h-1z" fill="#000"/><path d="M7 2h1v1h-1zM8 2h1v1h-1zM9 2h1v1h-1zM10 2h1v1h-1zM11 2h1v1h-1zM12 2h1v1h-1zM13 2h1v1h-1zM14 2h1v1h-1zM15 2h1v1h-1zM7 4h1v1h-1zM8 4h1v1h-1zM9 4h1v1h-1zM10 4h1v1h-1zM11 4h1v1h-1zM12 4h1v1h-1zM13 4h1v1h-1zM7 5h1v1h-1zM13 5h1v1h-1zM6 6h1v1h-1zM7 6h1v1h-1zM8 6h1v1h-1zM9 6h1v1h-1zM10 6h1v1h-1zM11 6h1v1h-1zM12 6h1v1h-1zM13 6h1v1h-1zM6 7h1v1h-1zM12 7h1v1h-1zM5 8h1v1h-1zM6 8h1v1h-1zM7 8h1v1h-1zM8 8h1v1h-1zM9 8h1v1h-1zM10 8h1v1h-1zM11 8h1v1h-1zM12 8h1v1h-1zM14 8h1v1h-1zM16 8h1v1h-1zM13 9h1v1h-1zM15 9h1v1h-1zM3 10h1v1h-1zM4 10h1v1h-1zM5 10h1v1h-1zM6 10h1v1h-1zM7 10h1v1h-1zM8 10h1v1h-1zM9 10h1v1h-1zM10 10h1v1h-1zM11 10h1v1h-1zM12 10h1v1h-1zM14 10h1v1h-1zM16 10h1v1h-1zM15 11h1v1h-1zM3 12h1v1h-1zM4 12h1v1h-1zM5 12h1v1h-1zM6 12h1v1h-1zM7 12h1v1h-1zM8 12h1v1h-1zM9 12h1v1h-1zM10 12h1v1h-1zM11 12h1v1h-1zM12 12h1v1h-1zM13 12h1v1h-1zM15 12h1v1h-1zM3 13h1v1h-1zM4 13h1v1h-1zM5 13h1v1h-1zM6 13h1v1h-1zM7 13h1v1h-1zM8 13h1v1h-1zM12 13h1v1h-1zM13 13h1v1h-1zM15 14h1v1h-1zM4 15h1v1h-1zM5 15h1v1h-1zM6 15h1v1h-1zM7 15h1v1h-1zM8 15h1v1h-1zM9 15h1v1h-1zM10 15h1v1h-1zM11 15h1v1h-1zM12 15h1v1h-1zM13 15h1v1h-1zM15 15h1v1h-1z" fill="#fff"/><path d="M9 13h1v1h-1zM10 13h1v1h-1zM11 13h1v1h-1z" fill="#ffff00"/></svg><svg class="a" style="left:188px;top:61px" width="19" height="19" viewBox="0 0 19 19"><path d="M6 1H11L17 13.5V16.5L15 18H3L1 16.5V13.5Z" fill="#a0a0a0"/></svg><svg class="a" style="left:213px;top:61px" width="19" height="19" viewBox="0 0 19 19"><path d="M5 1H12L17 5.5V13L12.5 17.5H5.5L1 13V5.5Z" fill="#a0a0a0"/><path d="M5.5 5.5L11.5 11.5M11.5 5.5L5.5 11.5" stroke="#fff" stroke-width="1.2"/></svg><svg class="a" style="left:245px;top:60px" width="20" height="18" viewBox="0 0 20 18" shape-rendering="crispEdges"><path d="M3 2h1v1h-1zM4 2h1v1h-1zM5 2h1v1h-1zM2 3h1v1h-1zM6 3h1v1h-1zM8 3h1v1h-1zM6 4h1v1h-1zM7 4h1v1h-1zM8 4h1v1h-1zM6 5h1v1h-1zM7 5h1v1h-1zM8 5h1v1h-1zM12 5h1v1h-1zM13 5h1v1h-1zM14 5h1v1h-1zM10 6h1v1h-1zM11 6h1v1h-1zM12 6h1v1h-1zM13 6h1v1h-1zM14 6h1v1h-1zM15 6h1v1h-1zM6 7h1v1h-1zM7 7h1v1h-1zM8 7h1v1h-1zM9 7h1v1h-1zM10 7h1v1h-1zM11 7h1v1h-1zM12 7h1v1h-1zM13 7h1v1h-1zM14 7h1v1h-1zM15 7h1v1h-1zM4 8h1v1h-1zM5 8h1v1h-1zM6 8h1v1h-1zM7 8h1v1h-1zM8 8h1v1h-1zM9 8h1v1h-1zM10 8h1v1h-1zM11 8h1v1h-1zM12 8h1v1h-1zM13 8h1v1h-1zM14 8h1v1h-1zM15 8h1v1h-1zM3 9h1v1h-1zM4 9h1v1h-1zM5 9h1v1h-1zM6 9h1v1h-1zM7 9h1v1h-1zM8 9h1v1h-1zM9 9h1v1h-1zM10 9h1v1h-1zM11 9h1v1h-1zM12 9h1v1h-1zM13 9h1v1h-1zM14 9h1v1h-1zM15 9h1v1h-1zM16 9h1v1h-1zM3 10h1v1h-1zM4 10h1v1h-1zM5 10h1v1h-1zM6 10h1v1h-1zM7 10h1v1h-1zM8 10h1v1h-1zM9 10h1v1h-1zM10 10h1v1h-1zM11 10h1v1h-1zM12 10h1v1h-1zM13 10h1v1h-1zM14 10h1v1h-1zM15 10h1v1h-1zM16 10h1v1h-1zM4 11h1v1h-1zM5 11h1v1h-1zM6 11h1v1h-1zM7 11h1v1h-1zM8 11h1v1h-1zM9 11h1v1h-1zM10 11h1v1h-1zM11 11h1v1h-1zM12 11h1v1h-1zM13 11h1v1h-1zM14 11h1v1h-1zM15 11h1v1h-1zM16 11h1v1h-1zM17 11h1v1h-1zM4 12h1v1h-1zM5 12h1v1h-1zM6 12h1v1h-1zM7 12h1v1h-1zM8 12h1v1h-1zM9 12h1v1h-1zM10 12h1v1h-1zM11 12h1v1h-1zM12 12h1v1h-1zM13 12h1v1h-1zM14 12h1v1h-1zM15 12h1v1h-1zM16 12h1v1h-1zM17 12h1v1h-1zM5 13h1v1h-1zM6 13h1v1h-1zM7 13h1v1h-1zM8 13h1v1h-1zM9 13h1v1h-1zM10 13h1v1h-1zM11 13h1v1h-1zM12 13h1v1h-1zM13 13h1v1h-1zM14 13h1v1h-1zM15 13h1v1h-1zM16 13h1v1h-1zM5 14h1v1h-1zM6 14h1v1h-1zM7 14h1v1h-1zM8 14h1v1h-1zM9 14h1v1h-1zM10 14h1v1h-1zM11 14h1v1h-1zM12 14h1v1h-1zM13 14h1v1h-1zM14 14h1v1h-1zM6 15h1v1h-1zM7 15h1v1h-1zM8 15h1v1h-1zM9 15h1v1h-1zM10 15h1v1h-1zM11 15h1v1h-1zM12 15h1v1h-1zM6 16h1v1h-1zM7 16h1v1h-1zM8 16h1v1h-1zM9 16h1v1h-1zM10 16h1v1h-1zM7 17h1v1h-1zM8 17h1v1h-1z" fill="#a0a0a0"/></svg><svg class="a" style="left:271px;top:60px" width="18" height="18" viewBox="0 0 18 18" shape-rendering="crispEdges"><path d="M12 3h1v1h-1zM13 4h1v1h-1zM11 5h1v1h-1zM12 5h1v1h-1zM13 5h1v1h-1zM14 5h1v1h-1zM14 6h1v1h-1zM14 7h1v1h-1zM14 8h1v1h-1zM14 9h1v1h-1zM14 10h1v1h-1zM14 11h1v1h-1zM14 12h1v1h-1zM14 13h1v1h-1zM14 14h1v1h-1zM14 15h1v1h-1zM14 16h1v1h-1zM2 17h1v1h-1zM3 17h1v1h-1zM4 17h1v1h-1zM5 17h1v1h-1zM6 17h1v1h-1zM7 17h1v1h-1zM8 17h1v1h-1zM9 17h1v1h-1zM10 17h1v1h-1zM11 17h1v1h-1zM12 17h1v1h-1zM13 17h1v1h-1zM14 17h1v1h-1z" fill="#000"/><path d="M12 2h1v1h-1zM3 3h1v1h-1zM4 3h1v1h-1zM5 3h1v1h-1zM6 3h1v1h-1zM7 3h1v1h-1zM8 3h1v1h-1zM9 3h1v1h-1zM10 3h1v1h-1zM11 3h1v1h-1zM13 3h1v1h-1zM3 4h1v1h-1zM4 4h1v1h-1zM5 4h1v1h-1zM6 4h1v1h-1zM7 4h1v1h-1zM8 4h1v1h-1zM9 4h1v1h-1zM10 4h1v1h-1zM11 4h1v1h-1zM12 4h1v1h-1zM14 4h1v1h-1zM3 5h1v1h-1zM4 5h1v1h-1zM5 5h1v1h-1zM6 5h1v1h-1zM7 5h1v1h-1zM9 5h1v1h-1zM10 5h1v1h-1zM3 6h1v1h-1zM4 6h1v1h-1zM5 6h1v1h-1zM6 6h1v1h-1zM7 6h1v1h-1zM10 6h1v1h-1zM11 6h1v1h-1zM12 6h1v1h-1zM13 6h1v1h-1zM3 7h1v1h-1zM4 7h1v1h-1zM5 7h1v1h-1zM11 7h1v1h-1zM12 7h1v1h-1zM13 7h1v1h-1zM3 8h1v1h-1zM4 8h1v1h-1zM7 8h1v1h-1zM10 8h1v1h-1zM11 8h1v1h-1zM12 8h1v1h-1zM13 8h1v1h-1zM3 9h1v1h-1zM4 9h1v1h-1zM6 9h1v1h-1zM7 9h1v1h-1zM9 9h1v1h-1zM10 9h1v1h-1zM11 9h1v1h-1zM12 9h1v1h-1zM13 9h1v1h-1zM3 10h1v1h-1zM4 10h1v1h-1zM6 10h1v1h-1zM7 10h1v1h-1zM8 10h1v1h-1zM9 10h1v1h-1zM10 10h1v1h-1zM11 10h1v1h-1zM13 10h1v1h-1zM3 11h1v1h-1zM4 11h1v1h-1zM5 11h1v1h-1zM6 11h1v1h-1zM7 11h1v1h-1zM9 11h1v1h-1zM10 11h1v1h-1zM11 11h1v1h-1zM13 11h1v1h-1zM3 12h1v1h-1zM4 12h1v1h-1zM5 12h1v1h-1zM6 12h1v1h-1zM9 12h1v1h-1zM10 12h1v1h-1zM13 12h1v1h-1zM3 13h1v1h-1zM4 13h1v1h-1zM5 13h1v1h-1zM11 13h1v1h-1zM12 13h1v1h-1zM13 13h1v1h-1zM3 14h1v1h-1zM4 14h1v1h-1zM5 14h1v1h-1zM6 14h1v1h-1zM9 14h1v1h-1zM10 14h1v1h-1zM11 14h1v1h-1zM12 14h1v1h-1zM13 14h1v1h-1zM3 15h1v1h-1zM4 15h1v1h-1zM5 15h1v1h-1zM6 15h1v1h-1zM7 15h1v1h-1zM9 15h1v1h-1zM10 15h1v1h-1zM11 15h1v1h-1zM12 15h1v1h-1zM13 15h1v1h-1zM3 16h1v1h-1zM4 16h1v1h-1zM5 16h1v1h-1zM6 16h1v1h-1zM7 16h1v1h-1zM8 16h1v1h-1zM9 16h1v1h-1zM10 16h1v1h-1zM11 16h1v1h-1zM12 16h1v1h-1zM13 16h1v1h-1z" fill="#fff"/><path d="M2 2h1v1h-1zM3 2h1v1h-1zM4 2h1v1h-1zM5 2h1v1h-1zM6 2h1v1h-1zM7 2h1v1h-1zM8 2h1v1h-1zM9 2h1v1h-1zM10 2h1v1h-1zM11 2h1v1h-1zM2 3h1v1h-1zM2 4h1v1h-1zM2 5h1v1h-1zM2 6h1v1h-1zM2 7h1v1h-1zM2 8h1v1h-1zM2 9h1v1h-1zM2 10h1v1h-1zM2 11h1v1h-1zM2 12h1v1h-1zM2 13h1v1h-1zM2 14h1v1h-1zM2 15h1v1h-1zM2 16h1v1h-1z" fill="#a0a0a0"/><path d="M8 5h1v1h-1zM8 6h1v1h-1zM9 6h1v1h-1zM6 7h1v1h-1zM7 7h1v1h-1zM8 7h1v1h-1zM9 7h1v1h-1zM10 7h1v1h-1zM8 8h1v1h-1zM9 8h1v1h-1zM8 9h1v1h-1zM8 11h1v1h-1zM7 12h1v1h-1zM8 12h1v1h-1zM6 13h1v1h-1zM7 13h1v1h-1zM8 13h1v1h-1zM9 13h1v1h-1zM10 13h1v1h-1zM7 14h1v1h-1zM8 14h1v1h-1zM8 15h1v1h-1z" fill="#008000"/><path d="M5 8h1v1h-1zM6 8h1v1h-1zM5 9h1v1h-1zM5 10h1v1h-1zM12 10h1v1h-1zM12 11h1v1h-1zM11 12h1v1h-1zM12 12h1v1h-1z" fill="#008080"/></svg><svg class="a" style="left:302px;top:59px" width="20" height="18" viewBox="0 0 20 18" shape-rendering="crispEdges"><path d="M5 3h1v1h-1zM6 3h1v1h-1zM6 4h1v1h-1zM7 4h1v1h-1zM7 5h1v1h-1zM8 5h1v1h-1zM2 6h1v1h-1zM8 6h1v1h-1zM9 6h1v1h-1zM10 6h1v1h-1zM11 6h1v1h-1zM12 6h1v1h-1zM13 6h1v1h-1zM2 7h1v1h-1zM9 7h1v1h-1zM13 7h1v1h-1zM14 7h1v1h-1zM2 8h1v1h-1zM10 8h1v1h-1zM13 8h1v1h-1zM15 8h1v1h-1zM2 9h1v1h-1zM13 9h1v1h-1zM16 9h1v1h-1zM2 10h1v1h-1zM9 10h1v1h-1zM10 10h1v1h-1zM11 10h1v1h-1zM13 10h1v1h-1zM14 10h1v1h-1zM15 10h1v1h-1zM16 10h1v1h-1zM17 10h1v1h-1zM8 11h1v1h-1zM17 11h1v1h-1zM7 12h1v1h-1zM8 12h1v1h-1zM10 12h1v1h-1zM12 12h1v1h-1zM13 12h1v1h-1zM15 12h1v1h-1zM17 12h1v1h-1zM6 13h1v1h-1zM8 13h1v1h-1zM17 13h1v1h-1zM8 14h1v1h-1zM10 14h1v1h-1zM11 14h1v1h-1zM13 14h1v1h-1zM14 14h1v1h-1zM15 14h1v1h-1zM17 14h1v1h-1zM8 15h1v1h-1zM17 15h1v1h-1zM8 16h1v1h-1zM17 16h1v1h-1zM8 17h1v1h-1zM9 17h1v1h-1zM10 17h1v1h-1zM11 17h1v1h-1zM12 17h1v1h-1zM13 17h1v1h-1zM14 17h1v1h-1zM15 17h1v1h-1zM16 17h1v1h-1zM17 17h1v1h-1z" fill="#000"/><path d="M10 7h1v1h-1zM11 7h1v1h-1zM12 7h1v1h-1zM11 8h1v1h-1zM12 8h1v1h-1zM14 8h1v1h-1zM10 9h1v1h-1zM11 9h1v1h-1zM12 9h1v1h-1zM14 9h1v1h-1zM15 9h1v1h-1zM12 10h1v1h-1zM9 11h1v1h-1zM10 11h1v1h-1zM11 11h1v1h-1zM12 11h1v1h-1zM13 11h1v1h-1zM14 11h1v1h-1zM15 11h1v1h-1zM16 11h1v1h-1zM9 12h1v1h-1zM11 12h1v1h-1zM14 12h1v1h-1zM16 12h1v1h-1zM7 13h1v1h-1zM9 13h1v1h-1zM10 13h1v1h-1zM11 13h1v1h-1zM12 13h1v1h-1zM13 13h1v1h-1zM14 13h1v1h-1zM15 13h1v1h-1zM16 13h1v1h-1zM9 14h1v1h-1zM12 14h1v1h-1zM16 14h1v1h-1zM9 15h1v1h-1zM10 15h1v1h-1zM11 15h1v1h-1zM12 15h1v1h-1zM13 15h1v1h-1zM14 15h1v1h-1zM15 15h1v1h-1zM16 15h1v1h-1zM9 16h1v1h-1zM10 16h1v1h-1zM11 16h1v1h-1zM12 16h1v1h-1zM13 16h1v1h-1zM14 16h1v1h-1zM15 16h1v1h-1zM16 16h1v1h-1z" fill="#fff"/><path d="M5 4h1v1h-1zM5 5h1v1h-1zM6 5h1v1h-1zM3 6h1v1h-1zM4 6h1v1h-1zM5 6h1v1h-1zM6 6h1v1h-1zM7 6h1v1h-1zM3 7h1v1h-1zM4 7h1v1h-1zM5 7h1v1h-1zM6 7h1v1h-1zM7 7h1v1h-1zM8 7h1v1h-1zM3 8h1v1h-1zM4 8h1v1h-1zM5 8h1v1h-1zM6 8h1v1h-1zM7 8h1v1h-1zM8 8h1v1h-1zM9 8h1v1h-1zM3 9h1v1h-1zM4 9h1v1h-1zM5 9h1v1h-1zM6 9h1v1h-1zM7 9h1v1h-1zM8 9h1v1h-1zM9 9h1v1h-1zM3 10h1v1h-1zM4 10h1v1h-1zM5 10h1v1h-1zM6 10h1v1h-1zM7 10h1v1h-1zM8 10h1v1h-1zM5 11h1v1h-1zM6 11h1v1h-1zM7 11h1v1h-1zM5 12h1v1h-1zM6 12h1v1h-1zM5 13h1v1h-1z" fill="#ff0000"/></svg><div class="t" style="left:338px;top:64px;letter-spacing:-0.2px"><span class="u">F</span>ilter:</div><div class="sunk" style="left:370px;top:60px;width:106px;height:20px"><div class="in"></div></div><div class="a" style="left:457px;top:62px;width:17px;height:16px;background:#f0f0f0;border-right:1px solid #696969;border-bottom:1px solid #696969;box-shadow:inset 1px 1px 0 #fff, inset -1px -1px 0 #a0a0a0"></div><svg class="a" style="left:462px;top:68px" width="7" height="4" viewBox="0 0 7 4"><path d="M0 0H7L3.5 4Z" fill="#000"/></svg><svg class="a" style="left:374px;top:61px" width="19" height="16" viewBox="0 0 19 16" shape-rendering="crispEdges"><path d="M14 3h1v1h-1zM15 3h1v1h-1zM12 4h1v1h-1zM15 4h1v1h-1zM7 5h1v1h-1zM8 5h1v1h-1zM10 5h1v1h-1zM13 5h1v1h-1zM16 5h1v1h-1zM5 6h1v1h-1zM6 6h1v1h-1zM11 6h1v1h-1zM16 6h1v1h-1zM4 7h1v1h-1zM10 7h1v1h-1zM17 7h1v1h-1zM4 8h1v1h-1zM9 8h1v1h-1zM17 8h1v1h-1zM5 9h1v1h-1zM7 9h1v1h-1zM18 9h1v1h-1zM5 10h1v1h-1zM18 10h1v1h-1zM6 11h1v1h-1zM16 11h1v1h-1zM17 11h1v1h-1zM6 12h1v1h-1zM14 12h1v1h-1zM15 12h1v1h-1zM7 13h1v1h-1zM12 13h1v1h-1zM13 13h1v1h-1zM7 14h1v1h-1zM10 14h1v1h-1zM11 14h1v1h-1zM8 15h1v1h-1zM9 15h1v1h-1z" fill="#000"/></svg><div class="t" style="left:397px;top:64px;font-size:12px;line-height:13px">(vse)</div><div class="a" style="left:1151px;top:53px;width:1px;height:35px;background:#a0a0a0;box-shadow:1px 0 0 #fff"></div><div class="a" style="left:1153px;top:53px;width:46px;height:35px;background:#d4d0c8"></div><svg class="a" style="left:1153px;top:53px" width="46" height="35" viewBox="0 0 46 35"><path d="M2 5.4H29L21.7 17.5H27.5L26.8 21.4H0.7L8.3 9.3Z" fill="#0033a0"/><path d="M17.7 9.3L11.2 17.8" stroke="#d4d0c8" stroke-width="1.3"/><path d="M22.5 22.5Q25 30 33 28Q45 25 45.5 16Q45 8 37 8.5Q29 9 25.5 14" fill="none" stroke="#2a6fd0" stroke-width="1.8"/><path d="M23 24Q30 30 39 26" fill="none" stroke="#2a6fd0" stroke-width="1.5"/><path d="M34.5 17L31.5 24.5" stroke="#2a6fd0" stroke-width="2.6"/><circle cx="36.7" cy="13" r="1.6" fill="#2a6fd0"/></svg><div class="t" style="left:15px;top:99px"><span class="sx" style="transform:scaleX(0.91)">EVIDENČNA ŠTEVILKA:</span></div><div class="t" style="left:29px;top:126px"><span class="sx" style="transform:scaleX(0.915)">POROČEV. ENOTA:</span></div><div class="t" style="left:256px;top:99px"><span class="sx" style="transform:scaleX(0.905)">TOK BLAGA:</span></div><div class="t" style="left:284px;top:126px"><span class="sx" style="transform:scaleX(0.92)">SURS:</span></div><div class="t" style="left:416px;top:99px"><span class="sx" style="transform:scaleX(0.905)">OBDOBJE:</span></div><div class="t" style="left:423px;top:123px"><span class="sx" style="transform:scaleX(0.935)">STATUS:</span></div><div class="t" style="left:567px;top:99px"><span class="sx" style="transform:scaleX(0.925)">OBRAZEC:</span></div><div class="sunk" style="left:128px;top:98px;width:120px;height:21px"><div class="in"></div></div><div class="t up" style="left:131px;top:102px"><span class="sx">TEST</span></div><div class="sunk" style="left:128px;top:123px;width:80px;height:20px"><div class="in"></div></div><div class="t num" style="left:131px;top:127px">85190586</div><div class="sunk" style="left:209px;top:123px;width:39px;height:20px"><div class="in"></div></div><div class="t num" style="left:212px;top:127px">000</div><div class="sunk" style="left:468px;top:98px;width:91px;height:21px"><div class="in"></div></div><div class="t num" style="left:471px;top:102px">201601</div><div class="sunk" style="left:316px;top:98px;width:94px;height:21px"><div class="in"></div></div><div class="t" style="left:322px;top:103px"><span class="sx">1 - PREJEMI</span></div><div class="a" style="left:391px;top:100px;width:17px;height:17px;background:#f0f0f0;border-right:1px solid #696969;border-bottom:1px solid #696969;box-shadow:inset 1px 1px 0 #fff, inset -1px -1px 0 #a0a0a0"></div><svg class="a" style="left:396px;top:106px" width="7" height="4" viewBox="0 0 7 4"><path d="M0 0H7L3.5 4Z" fill="#000"/></svg><div class="sunk" style="left:624px;top:98px;width:81px;height:21px"><div class="in"></div></div><div class="t" style="left:630px;top:103px"><span class="sx">NI ZADNJI</span></div><div class="a" style="left:686px;top:100px;width:17px;height:17px;background:#f0f0f0;border-right:1px solid #696969;border-bottom:1px solid #696969;box-shadow:inset 1px 1px 0 #fff, inset -1px -1px 0 #a0a0a0"></div><svg class="a" style="left:691px;top:106px" width="7" height="4" viewBox="0 0 7 4"><path d="M0 0H7L3.5 4Z" fill="#000"/></svg><div class="sunk" style="left:316px;top:126px;width:13px;height:13px;background:#f0f0f0"><div class="in" style="border-color:#696969 #e3e3e3 #e3e3e3 #696969"></div></div><div class="a" style="left:471px;top:123px;width:22px;height:17px"><svg width="22" height="17" shape-rendering="crispEdges"><use href="#fold"/></svg></div><div class="t" style="left:493px;top:125px;font-size:11px">Vnos</div><div class="t" style="left:573px;top:122px;font-weight:bold;letter-spacing:0px;word-spacing:2px;-webkit-text-stroke:0.25px #000">ZZI D.O.O.</div><div class="a" style="left:8px;top:153px;width:1193px;height:661px;border-top:1px solid #a0a0a0;border-left:1px solid #a0a0a0;border-bottom:1px solid #fff;border-right:1px solid #fff"></div><div class="a" style="left:9px;top:154px;width:1191px;height:659px;background:#fff;border-top:1px solid #696969;border-left:1px solid #696969;border-bottom:1px solid #e3e3e3;border-right:1px solid #e3e3e3"></div><div class="hd" style="left:10px;top:155px;width:11px;height:17px"></div><div class="hd" style="left:22px;top:155px;width:25px;height:17px;padding-left:1px;padding-top:1px"><span class="sx">ST</span></div><div class="hd" style="left:48px;top:155px;width:25px;height:17px;padding-left:1px;padding-top:1px"><span class="sx">NO.</span></div><div class="hd" style="left:74px;top:155px;width:129px;height:17px;padding-left:1px;padding-top:1px"><span class="sx">OPIS</span></div><div class="hd" style="left:204px;top:155px;width:30px;height:17px;padding-left:1px;padding-top:1px"><span class="sx">DEP</span></div><div class="hd" style="left:235px;top:155px;width:30px;height:17px;padding-left:1px;padding-top:1px"><span class="sx">ORG</span></div><div class="hd" style="left:266px;top:155px;width:35px;height:17px;padding-left:1px;padding-top:1px"><span class="sx">LEGA</span></div><div class="hd" style="left:302px;top:155px;width:40px;height:17px;padding-left:1px;padding-top:1px"><span class="sx">INCT</span></div><div class="hd" style="left:343px;top:155px;width:20px;height:17px;padding-left:1px;padding-top:1px"><span class="sx">VP</span></div><div class="hd" style="left:364px;top:155px;width:20px;height:17px;padding-left:1px;padding-top:1px"><span class="sx">VT</span></div><div class="hd" style="left:385px;top:155px;width:60px;height:17px;padding-left:1px;padding-top:1px"><span class="sx" style="transform:scaleX(0.95)">TARIFA</span></div><div class="hd" style="left:446px;top:155px;width:30px;height:17px;padding-left:1px;padding-top:1px"><span class="sx">NAC</span></div><div class="hd" style="left:477px;top:155px;width:70px;height:17px;padding-left:1px;padding-top:1px"><span class="sx">NETO MASA</span></div><div class="hd" style="left:548px;top:155px;width:60px;height:17px;padding-left:1px;padding-top:1px"><span class="sx">KOLIČINA</span></div><div class="hd" style="left:609px;top:155px;width:110px;height:17px;padding-left:1px;padding-top:1px"><span class="sx">ZNESEK NA FAKTURI</span></div><div class="hd" style="left:720px;top:155px;width:50px;height:17px;padding-left:1px;padding-top:1px"><span class="sx">VALUTA</span></div><div class="hd" style="left:771px;top:155px;width:96px;height:17px;padding-left:1px;padding-top:1px"><span class="sx">ZNESEK</span></div><div class="hd" style="left:868px;top:155px;width:100px;height:17px;padding-left:1px;padding-top:1px"><span class="sx">STAT. VREDNOST</span></div><div class="hd" style="left:969px;top:155px;width:30px;height:17px;padding-left:1px;padding-top:1px"><span class="sx">SURS</span></div><div class="hd" style="left:1000px;top:155px;width:71px;height:17px;padding-left:1px;padding-top:1px"><span class="sx" style="transform:scaleX(0.92)">ŠT. FAKTURE</span></div><div class="hd" style="left:1072px;top:155px;width:101px;height:17px;padding-left:1px;padding-top:1px"><span class="sx" style="transform:scaleX(0.86)">DATUM SPREMEMBE</span></div><div class="a" style="left:10px;top:172px;width:1164px;height:1px;background:#000"></div><div class="a" style="left:21px;top:155px;width:1px;height:17px;background:#000"></div><div class="a" style="left:47px;top:155px;width:1px;height:17px;background:#000"></div><div class="a" style="left:73px;top:155px;width:1px;height:17px;background:#000"></div><div class="a" style="left:203px;top:155px;width:1px;height:17px;background:#000"></div><div class="a" style="left:234px;top:155px;width:1px;height:17px;background:#000"></div><div class="a" style="left:265px;top:155px;width:1px;height:17px;background:#000"></div><div class="a" style="left:301px;top:155px;width:1px;height:17px;background:#000"></div><div class="a" style="left:342px;top:155px;width:1px;height:17px;background:#000"></div><div class="a" style="left:363px;top:155px;width:1px;height:17px;background:#000"></div><div class="a" style="left:384px;top:155px;width:1px;height:17px;background:#000"></div><div class="a" style="left:445px;top:155px;width:1px;height:17px;background:#000"></div><div class="a" style="left:476px;top:155px;width:1px;height:17px;background:#000"></div><div class="a" style="left:547px;top:155px;width:1px;height:17px;background:#000"></div><div class="a" style="left:608px;top:155px;width:1px;height:17px;background:#000"></div><div class="a" style="left:719px;top:155px;width:1px;height:17px;background:#000"></div><div class="a" style="left:770px;top:155px;width:1px;height:17px;background:#000"></div><div class="a" style="left:867px;top:155px;width:1px;height:17px;background:#000"></div><div class="a" style="left:968px;top:155px;width:1px;height:17px;background:#000"></div><div class="a" style="left:999px;top:155px;width:1px;height:17px;background:#000"></div><div class="a" style="left:1071px;top:155px;width:1px;height:17px;background:#000"></div><div class="a" style="left:1173px;top:155px;width:1px;height:17px;background:#000"></div><div class="hd" style="left:10px;top:173px;width:11px;height:17px"></div><div class="a" style="left:10px;top:190px;width:12px;height:1px;background:#000"></div><div class="hd" style="left:10px;top:191px;width:11px;height:17px"></div><div class="a" style="left:10px;top:208px;width:12px;height:1px;background:#000"></div><div class="hd" style="left:10px;top:209px;width:11px;height:17px"></div><div class="a" style="left:10px;top:226px;width:12px;height:1px;background:#000"></div><div class="hd" style="left:10px;top:227px;width:11px;height:17px"></div><div class="a" style="left:10px;top:244px;width:12px;height:1px;background:#000"></div><div class="hd" style="left:10px;top:245px;width:11px;height:17px"></div><div class="a" style="left:10px;top:262px;width:12px;height:1px;background:#000"></div><div class="hd" style="left:10px;top:263px;width:11px;height:17px"></div><div class="a" style="left:10px;top:280px;width:12px;height:1px;background:#000"></div><div class="hd" style="left:10px;top:281px;width:11px;height:17px"></div><div class="a" style="left:10px;top:298px;width:12px;height:1px;background:#000"></div><div class="hd" style="left:10px;top:299px;width:11px;height:17px"></div><div class="a" style="left:10px;top:316px;width:12px;height:1px;background:#000"></div><div class="hd" style="left:10px;top:317px;width:11px;height:17px"></div><div class="a" style="left:10px;top:334px;width:12px;height:1px;background:#000"></div><div class="hd" style="left:10px;top:335px;width:11px;height:17px"></div><div class="a" style="left:10px;top:352px;width:12px;height:1px;background:#000"></div><div class="hd" style="left:10px;top:353px;width:11px;height:17px"></div><div class="a" style="left:10px;top:370px;width:12px;height:1px;background:#000"></div><div class="hd" style="left:10px;top:371px;width:11px;height:17px"></div><div class="a" style="left:10px;top:388px;width:12px;height:1px;background:#000"></div><div class="hd" style="left:10px;top:389px;width:11px;height:17px"></div><div class="a" style="left:10px;top:406px;width:12px;height:1px;background:#000"></div><div class="hd" style="left:10px;top:407px;width:11px;height:17px"></div><div class="a" style="left:10px;top:424px;width:12px;height:1px;background:#000"></div><div class="hd" style="left:10px;top:425px;width:11px;height:17px"></div><div class="a" style="left:10px;top:442px;width:12px;height:1px;background:#000"></div><div class="hd" style="left:10px;top:443px;width:11px;height:17px"></div><div class="a" style="left:10px;top:460px;width:12px;height:1px;background:#000"></div><div class="hd" style="left:10px;top:461px;width:11px;height:17px"></div><div class="a" style="left:10px;top:478px;width:12px;height:1px;background:#000"></div><div class="hd" style="left:10px;top:479px;width:11px;height:17px"></div><div class="a" style="left:10px;top:496px;width:12px;height:1px;background:#000"></div><div class="hd" style="left:10px;top:497px;width:11px;height:17px"></div><div class="a" style="left:10px;top:514px;width:12px;height:1px;background:#000"></div><div class="hd" style="left:10px;top:515px;width:11px;height:17px"></div><div class="a" style="left:10px;top:532px;width:12px;height:1px;background:#000"></div><div class="hd" style="left:10px;top:533px;width:11px;height:17px"></div><div class="a" style="left:10px;top:550px;width:12px;height:1px;background:#000"></div><div class="hd" style="left:10px;top:551px;width:11px;height:17px"></div><div class="a" style="left:10px;top:568px;width:12px;height:1px;background:#000"></div><div class="hd" style="left:10px;top:569px;width:11px;height:17px"></div><div class="a" style="left:10px;top:586px;width:12px;height:1px;background:#000"></div><div class="hd" style="left:10px;top:587px;width:11px;height:17px"></div><div class="a" style="left:10px;top:604px;width:12px;height:1px;background:#000"></div><div class="hd" style="left:10px;top:605px;width:11px;height:17px"></div><div class="a" style="left:10px;top:622px;width:12px;height:1px;background:#000"></div><div class="hd" style="left:10px;top:623px;width:11px;height:17px"></div><div class="a" style="left:10px;top:640px;width:12px;height:1px;background:#000"></div><div class="hd" style="left:10px;top:641px;width:11px;height:17px"></div><div class="a" style="left:10px;top:658px;width:12px;height:1px;background:#000"></div><div class="hd" style="left:10px;top:659px;width:11px;height:17px"></div><div class="a" style="left:10px;top:676px;width:12px;height:1px;background:#000"></div><div class="hd" style="left:10px;top:677px;width:11px;height:17px"></div><div class="a" style="left:10px;top:694px;width:12px;height:1px;background:#000"></div><div class="hd" style="left:10px;top:695px;width:11px;height:17px"></div><div class="a" style="left:10px;top:712px;width:12px;height:1px;background:#000"></div><div class="hd" style="left:10px;top:713px;width:11px;height:17px"></div><div class="a" style="left:10px;top:730px;width:12px;height:1px;background:#000"></div><div class="hd" style="left:10px;top:731px;width:11px;height:17px"></div><div class="a" style="left:10px;top:748px;width:12px;height:1px;background:#000"></div><div class="hd" style="left:10px;top:749px;width:11px;height:17px"></div><div class="a" style="left:10px;top:766px;width:12px;height:1px;background:#000"></div><div class="hd" style="left:10px;top:767px;width:11px;height:17px"></div><div class="a" style="left:10px;top:784px;width:12px;height:1px;background:#000"></div><div class="hd" style="left:10px;top:785px;width:11px;height:17px"></div><div class="a" style="left:10px;top:802px;width:12px;height:1px;background:#000"></div><div class="a" style="left:21px;top:172px;width:1px;height:631px;background:#000"></div><div class="a" style="left:22px;top:190px;width:1152px;height:1px;background:#c8c8c8"></div><div class="a" style="left:22px;top:208px;width:1152px;height:1px;background:#c8c8c8"></div><div class="a" style="left:22px;top:226px;width:1152px;height:1px;background:#c8c8c8"></div><div class="a" style="left:22px;top:244px;width:1152px;height:1px;background:#c8c8c8"></div><div class="a" style="left:22px;top:262px;width:1152px;height:1px;background:#c8c8c8"></div><div class="a" style="left:22px;top:280px;width:1152px;height:1px;background:#c8c8c8"></div><div class="a" style="left:22px;top:298px;width:1152px;height:1px;background:#c8c8c8"></div><div class="a" style="left:22px;top:316px;width:1152px;height:1px;background:#c8c8c8"></div><div class="a" style="left:22px;top:334px;width:1152px;height:1px;background:#c8c8c8"></div><div class="a" style="left:22px;top:352px;width:1152px;height:1px;background:#c8c8c8"></div><div class="a" style="left:22px;top:370px;width:1152px;height:1px;background:#c8c8c8"></div><div class="a" style="left:22px;top:388px;width:1152px;height:1px;background:#c8c8c8"></div><div class="a" style="left:22px;top:406px;width:1152px;height:1px;background:#c8c8c8"></div><div class="a" style="left:22px;top:424px;width:1152px;height:1px;background:#c8c8c8"></div><div class="a" style="left:22px;top:442px;width:1152px;height:1px;background:#c8c8c8"></div><div class="a" style="left:22px;top:460px;width:1152px;height:1px;background:#c8c8c8"></div><div class="a" style="left:22px;top:478px;width:1152px;height:1px;background:#c8c8c8"></div><div class="a" style="left:22px;top:496px;width:1152px;height:1px;background:#c8c8c8"></div><div class="a" style="left:22px;top:514px;width:1152px;height:1px;background:#c8c8c8"></div><div class="a" style="left:22px;top:532px;width:1152px;height:1px;background:#c8c8c8"></div><div class="a" style="left:22px;top:550px;width:1152px;height:1px;background:#c8c8c8"></div><div class="a" style="left:22px;top:568px;width:1152px;height:1px;background:#c8c8c8"></div><div class="a" style="left:22px;top:586px;width:1152px;height:1px;background:#c8c8c8"></div><div class="a" style="left:22px;top:604px;width:1152px;height:1px;background:#c8c8c8"></div><div class="a" style="left:22px;top:622px;width:1152px;height:1px;background:#c8c8c8"></div><div class="a" style="left:22px;top:640px;width:1152px;height:1px;background:#c8c8c8"></div><div class="a" style="left:22px;top:658px;width:1152px;height:1px;background:#c8c8c8"></div><div class="a" style="left:22px;top:676px;width:1152px;height:1px;background:#c8c8c8"></div><div class="a" style="left:22px;top:694px;width:1152px;height:1px;background:#c8c8c8"></div><div class="a" style="left:22px;top:712px;width:1152px;height:1px;background:#c8c8c8"></div><div class="a" style="left:22px;top:730px;width:1152px;height:1px;background:#c8c8c8"></div><div class="a" style="left:22px;top:748px;width:1152px;height:1px;background:#c8c8c8"></div><div class="a" style="left:22px;top:766px;width:1152px;height:1px;background:#c8c8c8"></div><div class="a" style="left:22px;top:784px;width:1152px;height:1px;background:#c8c8c8"></div><div class="a" style="left:22px;top:802px;width:1152px;height:1px;background:#c8c8c8"></div><div class="a" style="left:47px;top:173px;width:1px;height:630px;background:#c8c8c8"></div><div class="a" style="left:73px;top:173px;width:1px;height:630px;background:#c8c8c8"></div><div class="a" style="left:203px;top:173px;width:1px;height:630px;background:#c8c8c8"></div><div class="a" style="left:234px;top:173px;width:1px;height:630px;background:#c8c8c8"></div><div class="a" style="left:265px;top:173px;width:1px;height:630px;background:#c8c8c8"></div><div class="a" style="left:301px;top:173px;width:1px;height:630px;background:#c8c8c8"></div><div class="a" style="left:342px;top:173px;width:1px;height:630px;background:#c8c8c8"></div><div class="a" style="left:363px;top:173px;width:1px;height:630px;background:#c8c8c8"></div><div class="a" style="left:384px;top:173px;width:1px;height:630px;background:#c8c8c8"></div><div class="a" style="left:445px;top:173px;width:1px;height:630px;background:#c8c8c8"></div><div class="a" style="left:476px;top:173px;width:1px;height:630px;background:#c8c8c8"></div><div class="a" style="left:547px;top:173px;width:1px;height:630px;background:#c8c8c8"></div><div class="a" style="left:608px;top:173px;width:1px;height:630px;background:#c8c8c8"></div><div class="a" style="left:719px;top:173px;width:1px;height:630px;background:#c8c8c8"></div><div class="a" style="left:770px;top:173px;width:1px;height:630px;background:#c8c8c8"></div><div class="a" style="left:867px;top:173px;width:1px;height:630px;background:#c8c8c8"></div><div class="a" style="left:968px;top:173px;width:1px;height:630px;background:#c8c8c8"></div><div class="a" style="left:999px;top:173px;width:1px;height:630px;background:#c8c8c8"></div><div class="a" style="left:1071px;top:173px;width:1px;height:630px;background:#c8c8c8"></div><div class="a" style="left:1173px;top:173px;width:1px;height:630px;background:#c8c8c8"></div><div class="a" style="left:22px;top:443px;width:1151px;height:17px;background:#3399ff"></div><div class="a" style="left:47px;top:443px;width:1px;height:17px;background:#c0c0c0"></div><div class="a" style="left:73px;top:443px;width:1px;height:17px;background:#c0c0c0"></div><div class="a" style="left:203px;top:443px;width:1px;height:17px;background:#c0c0c0"></div><div class="a" style="left:234px;top:443px;width:1px;height:17px;background:#c0c0c0"></div><div class="a" style="left:265px;top:443px;width:1px;height:17px;background:#c0c0c0"></div><div class="a" style="left:301px;top:443px;width:1px;height:17px;background:#c0c0c0"></div><div class="a" style="left:342px;top:443px;width:1px;height:17px;background:#c0c0c0"></div><div class="a" style="left:363px;top:443px;width:1px;height:17px;background:#c0c0c0"></div><div class="a" style="left:384px;top:443px;width:1px;height:17px;background:#c0c0c0"></div><div class="a" style="left:445px;top:443px;width:1px;height:17px;background:#c0c0c0"></div><div class="a" style="left:476px;top:443px;width:1px;height:17px;background:#c0c0c0"></div><div class="a" style="left:547px;top:443px;width:1px;height:17px;background:#c0c0c0"></div><div class="a" style="left:608px;top:443px;width:1px;height:17px;background:#c0c0c0"></div><div class="a" style="left:719px;top:443px;width:1px;height:17px;background:#c0c0c0"></div><div class="a" style="left:770px;top:443px;width:1px;height:17px;background:#c0c0c0"></div><div class="a" style="left:867px;top:443px;width:1px;height:17px;background:#c0c0c0"></div><div class="a" style="left:968px;top:443px;width:1px;height:17px;background:#c0c0c0"></div><div class="a" style="left:999px;top:443px;width:1px;height:17px;background:#c0c0c0"></div><div class="a" style="left:1071px;top:443px;width:1px;height:17px;background:#c0c0c0"></div><div class="a" style="left:22px;top:443px;width:1151px;height:17px;border:1px dotted #c86400"></div><svg class="a" style="left:12px;top:445px" width="6" height="11" viewBox="0 0 6 11" shape-rendering="crispEdges"><path d="M1 1h1v1h-1zM1 2h1v1h-1zM2 2h1v1h-1zM2 3h1v1h-1zM3 3h1v1h-1zM3 4h1v1h-1zM4 4h1v1h-1zM1 5h1v1h-1zM2 5h1v1h-1zM4 5h1v1h-1zM5 5h1v1h-1zM1 6h1v1h-1zM2 6h1v1h-1zM4 6h1v1h-1zM5 6h1v1h-1zM3 7h1v1h-1zM4 7h1v1h-1zM2 8h1v1h-1zM3 8h1v1h-1zM1 9h1v1h-1zM2 9h1v1h-1zM1 10h1v1h-1z" fill="#000"/></svg><div class="a" style="left:24px;top:173px;width:22px;height:17px"><svg width="22" height="17" shape-rendering="crispEdges"><use href="#fold"/></svg></div><div class="cell num" style="left:48px;top:174px;width:25px;text-align:right;padding-right:3px;color:#000">1</div><div class="cell up" style="left:74px;top:174px;width:129px;padding-left:1px;color:#000"><span class="sx">STROJNE ŽAGE ZA LES,PLUTO</span></div><div class="cell up" style="left:204px;top:174px;width:30px;padding-left:1px;color:#000"><span class="sx">HU</span></div><div class="cell up" style="left:235px;top:174px;width:30px;padding-left:1px;color:#000"><span class="sx">CN</span></div><div class="cell num" style="left:266px;top:174px;width:35px;text-align:right;padding-right:3px;color:#000">1</div><div class="cell up" style="left:302px;top:174px;width:40px;padding-left:1px;color:#000"><span class="sx">DAP</span></div><div class="cell num" style="left:343px;top:174px;width:20px;text-align:right;padding-right:3px;color:#000">11</div><div class="cell num" style="left:364px;top:174px;width:20px;text-align:right;padding-right:3px;color:#000">5</div><div class="cell num" style="left:385px;top:174px;width:60px;padding-left:1px;color:#000">84659120</div><div class="cell num" style="left:477px;top:174px;width:70px;text-align:right;padding-right:3px;color:#000">20,380</div><div class="cell num" style="left:548px;top:174px;width:60px;text-align:right;padding-right:3px;color:#000">1,000</div><div class="cell num" style="left:609px;top:174px;width:110px;text-align:right;padding-right:3px;color:#000">150,37</div><div class="cell num" style="left:771px;top:174px;width:96px;text-align:right;padding-right:3px;color:#000">150,37</div><div class="cell num" style="left:868px;top:174px;width:100px;text-align:right;padding-right:3px;color:#000">118,33</div><div class="cell up" style="left:969px;top:174px;width:30px;padding-left:1px;color:#000"><span class="sx">N</span></div><div class="cell num" style="left:1000px;top:174px;width:71px;padding-left:1px;color:#000">50125342</div><div class="cell num" style="left:1072px;top:174px;width:101px;padding-left:1px;color:#000">15.7.2016</div><div class="a" style="left:24px;top:191px;width:22px;height:17px"><svg width="22" height="17" shape-rendering="crispEdges"><use href="#fold"/></svg></div><div class="cell num" style="left:48px;top:192px;width:25px;text-align:right;padding-right:3px;color:#000">2</div><div class="cell up" style="left:74px;top:192px;width:129px;padding-left:1px;color:#000"><span class="sx">ROČNA ORODJA,Z VDELANIM</span></div><div class="cell up" style="left:204px;top:192px;width:30px;padding-left:1px;color:#000"><span class="sx">HU</span></div><div class="cell up" style="left:235px;top:192px;width:30px;padding-left:1px;color:#000"><span class="sx">HU</span></div><div class="cell num" style="left:266px;top:192px;width:35px;text-align:right;padding-right:3px;color:#000">1</div><div class="cell up" style="left:302px;top:192px;width:40px;padding-left:1px;color:#000"><span class="sx">DAP</span></div><div class="cell num" style="left:343px;top:192px;width:20px;text-align:right;padding-right:3px;color:#000">11</div><div class="cell num" style="left:364px;top:192px;width:20px;text-align:right;padding-right:3px;color:#000">3</div><div class="cell num" style="left:385px;top:192px;width:60px;padding-left:1px;color:#000">84672199</div><div class="cell num" style="left:477px;top:192px;width:70px;text-align:right;padding-right:3px;color:#000">13,500</div><div class="cell num" style="left:548px;top:192px;width:60px;text-align:right;padding-right:3px;color:#000">3,000</div><div class="cell num" style="left:609px;top:192px;width:110px;text-align:right;padding-right:3px;color:#000">337,91</div><div class="cell num" style="left:771px;top:192px;width:96px;text-align:right;padding-right:3px;color:#000">337,91</div><div class="cell num" style="left:868px;top:192px;width:100px;text-align:right;padding-right:3px;color:#000">327,77</div><div class="cell up" style="left:969px;top:192px;width:30px;padding-left:1px;color:#000"><span class="sx">N</span></div><div class="cell num" style="left:1000px;top:192px;width:71px;padding-left:1px;color:#000">1018109774</div><div class="cell num" style="left:1072px;top:192px;width:101px;padding-left:1px;color:#000">17.2.2016</div><div class="a" style="left:24px;top:209px;width:22px;height:17px"><svg width="22" height="17" shape-rendering="crispEdges"><use href="#fold"/></svg></div><div class="cell num" style="left:48px;top:210px;width:25px;text-align:right;padding-right:3px;color:#000">3</div><div class="cell up" style="left:74px;top:210px;width:129px;padding-left:1px;color:#000"><span class="sx">DALJINOMERI, ELEKTRONSKI</span></div><div class="cell up" style="left:204px;top:210px;width:30px;padding-left:1px;color:#000"><span class="sx">HU</span></div><div class="cell up" style="left:235px;top:210px;width:30px;padding-left:1px;color:#000"><span class="sx">MY</span></div><div class="cell num" style="left:266px;top:210px;width:35px;text-align:right;padding-right:3px;color:#000">1</div><div class="cell up" style="left:302px;top:210px;width:40px;padding-left:1px;color:#000"><span class="sx">DAP</span></div><div class="cell num" style="left:343px;top:210px;width:20px;text-align:right;padding-right:3px;color:#000">11</div><div class="cell num" style="left:364px;top:210px;width:20px;text-align:right;padding-right:3px;color:#000">3</div><div class="cell num" style="left:385px;top:210px;width:60px;padding-left:1px;color:#000">90151010</div><div class="cell num" style="left:477px;top:210px;width:70px;text-align:right;padding-right:3px;color:#000">0,198</div><div class="cell num" style="left:609px;top:210px;width:110px;text-align:right;padding-right:3px;color:#000">162,30</div><div class="cell num" style="left:771px;top:210px;width:96px;text-align:right;padding-right:3px;color:#000">162,30</div><div class="cell num" style="left:868px;top:210px;width:100px;text-align:right;padding-right:3px;color:#000">157,43</div><div class="cell up" style="left:969px;top:210px;width:30px;padding-left:1px;color:#000"><span class="sx">N</span></div><div class="cell num" style="left:1000px;top:210px;width:71px;padding-left:1px;color:#000">1018109774</div><div class="cell num" style="left:1072px;top:210px;width:101px;padding-left:1px;color:#000">17.2.2016</div><div class="a" style="left:24px;top:227px;width:22px;height:17px"><svg width="22" height="17" shape-rendering="crispEdges"><use href="#fold"/></svg></div><div class="cell num" style="left:48px;top:228px;width:25px;text-align:right;padding-right:3px;color:#000">4</div><div class="cell lo" style="left:74px;top:228px;width:129px;padding-left:1px;color:#000">Ročna orodja, z vdelanim elektro</div><div class="cell up" style="left:204px;top:228px;width:30px;padding-left:1px;color:#000"><span class="sx">HU</span></div><div class="cell up" style="left:235px;top:228px;width:30px;padding-left:1px;color:#000"><span class="sx">MY</span></div><div class="cell num" style="left:266px;top:228px;width:35px;text-align:right;padding-right:3px;color:#000">1</div><div class="cell up" style="left:302px;top:228px;width:40px;padding-left:1px;color:#000"><span class="sx">DAP</span></div><div class="cell num" style="left:343px;top:228px;width:20px;text-align:right;padding-right:3px;color:#000">11</div><div class="cell num" style="left:364px;top:228px;width:20px;text-align:right;padding-right:3px;color:#000">3</div><div class="cell num" style="left:385px;top:228px;width:60px;padding-left:1px;color:#000">84672920</div><div class="cell num" style="left:477px;top:228px;width:70px;text-align:right;padding-right:3px;color:#000">3,300</div><div class="cell num" style="left:548px;top:228px;width:60px;text-align:right;padding-right:3px;color:#000">3,000</div><div class="cell num" style="left:609px;top:228px;width:110px;text-align:right;padding-right:3px;color:#000">351,67</div><div class="cell num" style="left:771px;top:228px;width:96px;text-align:right;padding-right:3px;color:#000">351,67</div><div class="cell num" style="left:868px;top:228px;width:100px;text-align:right;padding-right:3px;color:#000">341,12</div><div class="cell up" style="left:969px;top:228px;width:30px;padding-left:1px;color:#000"><span class="sx">N</span></div><div class="cell num" style="left:1000px;top:228px;width:71px;padding-left:1px;color:#000">1018109774</div><div class="cell num" style="left:1072px;top:228px;width:101px;padding-left:1px;color:#000">17.2.2016</div><div class="a" style="left:24px;top:245px;width:22px;height:17px"><svg width="22" height="17" shape-rendering="crispEdges"><use href="#fold"/></svg></div><div class="cell num" style="left:48px;top:246px;width:25px;text-align:right;padding-right:3px;color:#000">5</div><div class="cell up" style="left:74px;top:246px;width:129px;padding-left:1px;color:#000"><span class="sx">ROČNA ORODJA, DRUGA, Z</span></div><div class="cell up" style="left:204px;top:246px;width:30px;padding-left:1px;color:#000"><span class="sx">HU</span></div><div class="cell up" style="left:235px;top:246px;width:30px;padding-left:1px;color:#000"><span class="sx">CN</span></div><div class="cell num" style="left:266px;top:246px;width:35px;text-align:right;padding-right:3px;color:#000">1</div><div class="cell up" style="left:302px;top:246px;width:40px;padding-left:1px;color:#000"><span class="sx">DAP</span></div><div class="cell num" style="left:343px;top:246px;width:20px;text-align:right;padding-right:3px;color:#000">11</div><div class="cell num" style="left:364px;top:246px;width:20px;text-align:right;padding-right:3px;color:#000">3</div><div class="cell num" style="left:385px;top:246px;width:60px;padding-left:1px;color:#000">84678900</div><div class="cell num" style="left:477px;top:246px;width:70px;text-align:right;padding-right:3px;color:#000">11,200</div><div class="cell num" style="left:609px;top:246px;width:110px;text-align:right;padding-right:3px;color:#000">508,99</div><div class="cell num" style="left:771px;top:246px;width:96px;text-align:right;padding-right:3px;color:#000">508,99</div><div class="cell num" style="left:868px;top:246px;width:100px;text-align:right;padding-right:3px;color:#000">493,72</div><div class="cell up" style="left:969px;top:246px;width:30px;padding-left:1px;color:#000"><span class="sx">N</span></div><div class="cell num" style="left:1000px;top:246px;width:71px;padding-left:1px;color:#000">1018109774</div><div class="cell num" style="left:1072px;top:246px;width:101px;padding-left:1px;color:#000">17.2.2016</div><div class="a" style="left:24px;top:263px;width:22px;height:17px"><svg width="22" height="17" shape-rendering="crispEdges"><use href="#fold"/></svg></div><div class="cell num" style="left:48px;top:264px;width:25px;text-align:right;padding-right:3px;color:#000">6</div><div class="cell up" style="left:74px;top:264px;width:129px;padding-left:1px;color:#000"><span class="sx">ROČNA ORODJA,Z VDELANIM</span></div><div class="cell up" style="left:204px;top:264px;width:30px;padding-left:1px;color:#000"><span class="sx">HU</span></div><div class="cell up" style="left:235px;top:264px;width:30px;padding-left:1px;color:#000"><span class="sx">HU</span></div><div class="cell num" style="left:266px;top:264px;width:35px;text-align:right;padding-right:3px;color:#000">1</div><div class="cell up" style="left:302px;top:264px;width:40px;padding-left:1px;color:#000"><span class="sx">DAP</span></div><div class="cell num" style="left:343px;top:264px;width:20px;text-align:right;padding-right:3px;color:#000">11</div><div class="cell num" style="left:364px;top:264px;width:20px;text-align:right;padding-right:3px;color:#000">3</div><div class="cell num" style="left:385px;top:264px;width:60px;padding-left:1px;color:#000">84672199</div><div class="cell num" style="left:477px;top:264px;width:70px;text-align:right;padding-right:3px;color:#000">6,640</div><div class="cell num" style="left:548px;top:264px;width:60px;text-align:right;padding-right:3px;color:#000">4,000</div><div class="cell num" style="left:609px;top:264px;width:110px;text-align:right;padding-right:3px;color:#000">136,64</div><div class="cell num" style="left:771px;top:264px;width:96px;text-align:right;padding-right:3px;color:#000">136,64</div><div class="cell num" style="left:868px;top:264px;width:100px;text-align:right;padding-right:3px;color:#000">132,54</div><div class="cell up" style="left:969px;top:264px;width:30px;padding-left:1px;color:#000"><span class="sx">N</span></div><div class="cell num" style="left:1000px;top:264px;width:71px;padding-left:1px;color:#000">1018109774</div><div class="cell num" style="left:1072px;top:264px;width:101px;padding-left:1px;color:#000">17.2.2016</div><div class="a" style="left:24px;top:281px;width:22px;height:17px"><svg width="22" height="17" shape-rendering="crispEdges"><use href="#fold"/></svg></div><div class="cell num" style="left:48px;top:282px;width:25px;text-align:right;padding-right:3px;color:#000">7</div><div class="cell up" style="left:74px;top:282px;width:129px;padding-left:1px;color:#000"><span class="sx">ROČNA ORODJA,Z VDELANIM</span></div><div class="cell up" style="left:204px;top:282px;width:30px;padding-left:1px;color:#000"><span class="sx">HU</span></div><div class="cell up" style="left:235px;top:282px;width:30px;padding-left:1px;color:#000"><span class="sx">HU</span></div><div class="cell num" style="left:266px;top:282px;width:35px;text-align:right;padding-right:3px;color:#000">1</div><div class="cell up" style="left:302px;top:282px;width:40px;padding-left:1px;color:#000"><span class="sx">DAP</span></div><div class="cell num" style="left:343px;top:282px;width:20px;text-align:right;padding-right:3px;color:#000">11</div><div class="cell num" style="left:364px;top:282px;width:20px;text-align:right;padding-right:3px;color:#000">3</div><div class="cell num" style="left:385px;top:282px;width:60px;padding-left:1px;color:#000">84672959</div><div class="cell num" style="left:477px;top:282px;width:70px;text-align:right;padding-right:3px;color:#000">2,500</div><div class="cell num" style="left:548px;top:282px;width:60px;text-align:right;padding-right:3px;color:#000">2,000</div><div class="cell num" style="left:609px;top:282px;width:110px;text-align:right;padding-right:3px;color:#000">71,32</div><div class="cell num" style="left:771px;top:282px;width:96px;text-align:right;padding-right:3px;color:#000">71,32</div><div class="cell num" style="left:868px;top:282px;width:100px;text-align:right;padding-right:3px;color:#000">69,18</div><div class="cell up" style="left:969px;top:282px;width:30px;padding-left:1px;color:#000"><span class="sx">N</span></div><div class="cell num" style="left:1000px;top:282px;width:71px;padding-left:1px;color:#000">1018109774</div><div class="cell num" style="left:1072px;top:282px;width:101px;padding-left:1px;color:#000">17.2.2016</div><div class="a" style="left:24px;top:299px;width:22px;height:17px"><svg width="22" height="17" shape-rendering="crispEdges"><use href="#fold"/></svg></div><div class="cell num" style="left:48px;top:300px;width:25px;text-align:right;padding-right:3px;color:#000">8</div><div class="cell lo" style="left:74px;top:300px;width:129px;padding-left:1px;color:#000">Ročna orodja, z vdelanim elektro</div><div class="cell up" style="left:204px;top:300px;width:30px;padding-left:1px;color:#000"><span class="sx">HU</span></div><div class="cell up" style="left:235px;top:300px;width:30px;padding-left:1px;color:#000"><span class="sx">HU</span></div><div class="cell num" style="left:266px;top:300px;width:35px;text-align:right;padding-right:3px;color:#000">1</div><div class="cell up" style="left:302px;top:300px;width:40px;padding-left:1px;color:#000"><span class="sx">DAP</span></div><div class="cell num" style="left:343px;top:300px;width:20px;text-align:right;padding-right:3px;color:#000">11</div><div class="cell num" style="left:364px;top:300px;width:20px;text-align:right;padding-right:3px;color:#000">3</div><div class="cell num" style="left:385px;top:300px;width:60px;padding-left:1px;color:#000">84672920</div><div class="cell num" style="left:477px;top:300px;width:70px;text-align:right;padding-right:3px;color:#000">2,670</div><div class="cell num" style="left:548px;top:300px;width:60px;text-align:right;padding-right:3px;color:#000">2,000</div><div class="cell num" style="left:609px;top:300px;width:110px;text-align:right;padding-right:3px;color:#000">214,86</div><div class="cell num" style="left:771px;top:300px;width:96px;text-align:right;padding-right:3px;color:#000">214,86</div><div class="cell num" style="left:868px;top:300px;width:100px;text-align:right;padding-right:3px;color:#000">208,41</div><div class="cell up" style="left:969px;top:300px;width:30px;padding-left:1px;color:#000"><span class="sx">N</span></div><div class="cell num" style="left:1000px;top:300px;width:71px;padding-left:1px;color:#000">1018109774</div><div class="cell num" style="left:1072px;top:300px;width:101px;padding-left:1px;color:#000">17.2.2016</div><div class="a" style="left:24px;top:317px;width:22px;height:17px"><svg width="22" height="17" shape-rendering="crispEdges"><use href="#fold"/></svg></div><div class="cell num" style="left:48px;top:318px;width:25px;text-align:right;padding-right:3px;color:#000">9</div><div class="cell up" style="left:74px;top:318px;width:129px;padding-left:1px;color:#000"><span class="sx">ROČNA ORODJA,Z VDELANIM</span></div><div class="cell up" style="left:204px;top:318px;width:30px;padding-left:1px;color:#000"><span class="sx">HU</span></div><div class="cell up" style="left:235px;top:318px;width:30px;padding-left:1px;color:#000"><span class="sx">HU</span></div><div class="cell num" style="left:266px;top:318px;width:35px;text-align:right;padding-right:3px;color:#000">1</div><div class="cell up" style="left:302px;top:318px;width:40px;padding-left:1px;color:#000"><span class="sx">DAP</span></div><div class="cell num" style="left:343px;top:318px;width:20px;text-align:right;padding-right:3px;color:#000">11</div><div class="cell num" style="left:364px;top:318px;width:20px;text-align:right;padding-right:3px;color:#000">3</div><div class="cell num" style="left:385px;top:318px;width:60px;padding-left:1px;color:#000">84672290</div><div class="cell num" style="left:477px;top:318px;width:70px;text-align:right;padding-right:3px;color:#000">17,340</div><div class="cell num" style="left:548px;top:318px;width:60px;text-align:right;padding-right:3px;color:#000">10,000</div><div class="cell num" style="left:609px;top:318px;width:110px;text-align:right;padding-right:3px;color:#000">244,88</div><div class="cell num" style="left:771px;top:318px;width:96px;text-align:right;padding-right:3px;color:#000">244,88</div><div class="cell num" style="left:868px;top:318px;width:100px;text-align:right;padding-right:3px;color:#000">237,53</div><div class="cell up" style="left:969px;top:318px;width:30px;padding-left:1px;color:#000"><span class="sx">N</span></div><div class="cell num" style="left:1000px;top:318px;width:71px;padding-left:1px;color:#000">1018109774</div><div class="cell num" style="left:1072px;top:318px;width:101px;padding-left:1px;color:#000">17.2.2016</div><div class="a" style="left:24px;top:335px;width:22px;height:17px"><svg width="22" height="17" shape-rendering="crispEdges"><use href="#fold"/></svg></div><div class="cell num" style="left:48px;top:336px;width:25px;text-align:right;padding-right:3px;color:#000">10</div><div class="cell up" style="left:74px;top:336px;width:129px;padding-left:1px;color:#000"><span class="sx">DRŽALA ZA ORODJE, DRUGO</span></div><div class="cell up" style="left:204px;top:336px;width:30px;padding-left:1px;color:#000"><span class="sx">HU</span></div><div class="cell up" style="left:235px;top:336px;width:30px;padding-left:1px;color:#000"><span class="sx">CN</span></div><div class="cell num" style="left:266px;top:336px;width:35px;text-align:right;padding-right:3px;color:#000">1</div><div class="cell up" style="left:302px;top:336px;width:40px;padding-left:1px;color:#000"><span class="sx">DAP</span></div><div class="cell num" style="left:343px;top:336px;width:20px;text-align:right;padding-right:3px;color:#000">11</div><div class="cell num" style="left:364px;top:336px;width:20px;text-align:right;padding-right:3px;color:#000">3</div><div class="cell num" style="left:385px;top:336px;width:60px;padding-left:1px;color:#000">84661038</div><div class="cell num" style="left:477px;top:336px;width:70px;text-align:right;padding-right:3px;color:#000">43,200</div><div class="cell num" style="left:609px;top:336px;width:110px;text-align:right;padding-right:3px;color:#000">536,18</div><div class="cell num" style="left:771px;top:336px;width:96px;text-align:right;padding-right:3px;color:#000">536,18</div><div class="cell num" style="left:868px;top:336px;width:100px;text-align:right;padding-right:3px;color:#000">520,09</div><div class="cell up" style="left:969px;top:336px;width:30px;padding-left:1px;color:#000"><span class="sx">N</span></div><div class="cell num" style="left:1000px;top:336px;width:71px;padding-left:1px;color:#000">1018109774</div><div class="cell num" style="left:1072px;top:336px;width:101px;padding-left:1px;color:#000">17.2.2016</div><div class="a" style="left:24px;top:353px;width:22px;height:17px"><svg width="22" height="17" shape-rendering="crispEdges"><use href="#fold"/></svg></div><div class="cell num" style="left:48px;top:354px;width:25px;text-align:right;padding-right:3px;color:#000">11</div><div class="cell up" style="left:74px;top:354px;width:129px;padding-left:1px;color:#000"><span class="sx">ROČNA ORODJA,Z VDELANIM</span></div><div class="cell up" style="left:204px;top:354px;width:30px;padding-left:1px;color:#000"><span class="sx">HU</span></div><div class="cell up" style="left:235px;top:354px;width:30px;padding-left:1px;color:#000"><span class="sx">HU</span></div><div class="cell num" style="left:266px;top:354px;width:35px;text-align:right;padding-right:3px;color:#000">1</div><div class="cell up" style="left:302px;top:354px;width:40px;padding-left:1px;color:#000"><span class="sx">DAP</span></div><div class="cell num" style="left:343px;top:354px;width:20px;text-align:right;padding-right:3px;color:#000">11</div><div class="cell num" style="left:364px;top:354px;width:20px;text-align:right;padding-right:3px;color:#000">3</div><div class="cell num" style="left:385px;top:354px;width:60px;padding-left:1px;color:#000">84672210</div><div class="cell num" style="left:477px;top:354px;width:70px;text-align:right;padding-right:3px;color:#000">7,420</div><div class="cell num" style="left:548px;top:354px;width:60px;text-align:right;padding-right:3px;color:#000">2,000</div><div class="cell num" style="left:609px;top:354px;width:110px;text-align:right;padding-right:3px;color:#000">322,10</div><div class="cell num" style="left:771px;top:354px;width:96px;text-align:right;padding-right:3px;color:#000">322,10</div><div class="cell num" style="left:868px;top:354px;width:100px;text-align:right;padding-right:3px;color:#000">312,44</div><div class="cell up" style="left:969px;top:354px;width:30px;padding-left:1px;color:#000"><span class="sx">N</span></div><div class="cell num" style="left:1000px;top:354px;width:71px;padding-left:1px;color:#000">1018109774</div><div class="cell num" style="left:1072px;top:354px;width:101px;padding-left:1px;color:#000">17.2.2016</div><div class="a" style="left:24px;top:371px;width:22px;height:17px"><svg width="22" height="17" shape-rendering="crispEdges"><use href="#fold"/></svg></div><div class="cell num" style="left:48px;top:372px;width:25px;text-align:right;padding-right:3px;color:#000">12</div><div class="cell lo" style="left:74px;top:372px;width:129px;padding-left:1px;color:#000">Ročna orodja, z vdelanim elektro</div><div class="cell up" style="left:204px;top:372px;width:30px;padding-left:1px;color:#000"><span class="sx">HU</span></div><div class="cell up" style="left:235px;top:372px;width:30px;padding-left:1px;color:#000"><span class="sx">MY</span></div><div class="cell num" style="left:266px;top:372px;width:35px;text-align:right;padding-right:3px;color:#000">1</div><div class="cell up" style="left:302px;top:372px;width:40px;padding-left:1px;color:#000"><span class="sx">DAP</span></div><div class="cell num" style="left:343px;top:372px;width:20px;text-align:right;padding-right:3px;color:#000">11</div><div class="cell num" style="left:364px;top:372px;width:20px;text-align:right;padding-right:3px;color:#000">3</div><div class="cell num" style="left:385px;top:372px;width:60px;padding-left:1px;color:#000">84672985</div><div class="cell num" style="left:477px;top:372px;width:70px;text-align:right;padding-right:3px;color:#000">9,380</div><div class="cell num" style="left:548px;top:372px;width:60px;text-align:right;padding-right:3px;color:#000">2,000</div><div class="cell num" style="left:609px;top:372px;width:110px;text-align:right;padding-right:3px;color:#000">228,07</div><div class="cell num" style="left:771px;top:372px;width:96px;text-align:right;padding-right:3px;color:#000">228,07</div><div class="cell num" style="left:868px;top:372px;width:100px;text-align:right;padding-right:3px;color:#000">221,23</div><div class="cell up" style="left:969px;top:372px;width:30px;padding-left:1px;color:#000"><span class="sx">N</span></div><div class="cell num" style="left:1000px;top:372px;width:71px;padding-left:1px;color:#000">1018109774</div><div class="cell num" style="left:1072px;top:372px;width:101px;padding-left:1px;color:#000">17.2.2016</div><div class="a" style="left:24px;top:389px;width:22px;height:17px"><svg width="22" height="17" shape-rendering="crispEdges"><use href="#fold"/></svg></div><div class="cell num" style="left:48px;top:390px;width:25px;text-align:right;padding-right:3px;color:#000">13</div><div class="cell lo" style="left:74px;top:390px;width:129px;padding-left:1px;color:#000">Ročna orodja, z vdelanim elektro</div><div class="cell up" style="left:204px;top:390px;width:30px;padding-left:1px;color:#000"><span class="sx">HU</span></div><div class="cell up" style="left:235px;top:390px;width:30px;padding-left:1px;color:#000"><span class="sx">MY</span></div><div class="cell num" style="left:266px;top:390px;width:35px;text-align:right;padding-right:3px;color:#000">1</div><div class="cell up" style="left:302px;top:390px;width:40px;padding-left:1px;color:#000"><span class="sx">DAP</span></div><div class="cell num" style="left:343px;top:390px;width:20px;text-align:right;padding-right:3px;color:#000">11</div><div class="cell num" style="left:364px;top:390px;width:20px;text-align:right;padding-right:3px;color:#000">3</div><div class="cell num" style="left:385px;top:390px;width:60px;padding-left:1px;color:#000">84672920</div><div class="cell num" style="left:477px;top:390px;width:70px;text-align:right;padding-right:3px;color:#000">7,200</div><div class="cell num" style="left:548px;top:390px;width:60px;text-align:right;padding-right:3px;color:#000">4,000</div><div class="cell num" style="left:609px;top:390px;width:110px;text-align:right;padding-right:3px;color:#000">924,30</div><div class="cell num" style="left:771px;top:390px;width:96px;text-align:right;padding-right:3px;color:#000">924,30</div><div class="cell num" style="left:868px;top:390px;width:100px;text-align:right;padding-right:3px;color:#000">896,57</div><div class="cell up" style="left:969px;top:390px;width:30px;padding-left:1px;color:#000"><span class="sx">N</span></div><div class="cell num" style="left:1000px;top:390px;width:71px;padding-left:1px;color:#000">1018109774</div><div class="cell num" style="left:1072px;top:390px;width:101px;padding-left:1px;color:#000">17.2.2016</div><div class="a" style="left:24px;top:407px;width:22px;height:17px"><svg width="22" height="17" shape-rendering="crispEdges"><use href="#fold"/></svg></div><div class="cell num" style="left:48px;top:408px;width:25px;text-align:right;padding-right:3px;color:#000">14</div><div class="cell up" style="left:74px;top:408px;width:129px;padding-left:1px;color:#000"><span class="sx">OBDELOVALNI STROJI ZA OBD</span></div><div class="cell up" style="left:204px;top:408px;width:30px;padding-left:1px;color:#000"><span class="sx">HU</span></div><div class="cell up" style="left:235px;top:408px;width:30px;padding-left:1px;color:#000"><span class="sx">CN</span></div><div class="cell num" style="left:266px;top:408px;width:35px;text-align:right;padding-right:3px;color:#000">1</div><div class="cell up" style="left:302px;top:408px;width:40px;padding-left:1px;color:#000"><span class="sx">DAP</span></div><div class="cell num" style="left:343px;top:408px;width:20px;text-align:right;padding-right:3px;color:#000">11</div><div class="cell num" style="left:364px;top:408px;width:20px;text-align:right;padding-right:3px;color:#000">3</div><div class="cell num" style="left:385px;top:408px;width:60px;padding-left:1px;color:#000">84609090</div><div class="cell num" style="left:477px;top:408px;width:70px;text-align:right;padding-right:3px;color:#000">27,500</div><div class="cell num" style="left:548px;top:408px;width:60px;text-align:right;padding-right:3px;color:#000">2,000</div><div class="cell num" style="left:609px;top:408px;width:110px;text-align:right;padding-right:3px;color:#000">233,07</div><div class="cell num" style="left:771px;top:408px;width:96px;text-align:right;padding-right:3px;color:#000">233,07</div><div class="cell num" style="left:868px;top:408px;width:100px;text-align:right;padding-right:3px;color:#000">226,08</div><div class="cell up" style="left:969px;top:408px;width:30px;padding-left:1px;color:#000"><span class="sx">N</span></div><div class="cell num" style="left:1000px;top:408px;width:71px;padding-left:1px;color:#000">1018109774</div><div class="cell num" style="left:1072px;top:408px;width:101px;padding-left:1px;color:#000">17.2.2016</div><div class="a" style="left:24px;top:425px;width:22px;height:17px"><svg width="22" height="17" shape-rendering="crispEdges"><use href="#fold"/></svg></div><div class="cell num" style="left:48px;top:426px;width:25px;text-align:right;padding-right:3px;color:#000">15</div><div class="cell up" style="left:74px;top:426px;width:129px;padding-left:1px;color:#000"><span class="sx">ROČNA ORODJA,Z VDELANIM</span></div><div class="cell up" style="left:204px;top:426px;width:30px;padding-left:1px;color:#000"><span class="sx">HU</span></div><div class="cell up" style="left:235px;top:426px;width:30px;padding-left:1px;color:#000"><span class="sx">DE</span></div><div class="cell num" style="left:266px;top:426px;width:35px;text-align:right;padding-right:3px;color:#000">1</div><div class="cell up" style="left:302px;top:426px;width:40px;padding-left:1px;color:#000"><span class="sx">DAP</span></div><div class="cell num" style="left:343px;top:426px;width:20px;text-align:right;padding-right:3px;color:#000">11</div><div class="cell num" style="left:364px;top:426px;width:20px;text-align:right;padding-right:3px;color:#000">3</div><div class="cell num" style="left:385px;top:426px;width:60px;padding-left:1px;color:#000">84672191</div><div class="cell num" style="left:477px;top:426px;width:70px;text-align:right;padding-right:3px;color:#000">3,274</div><div class="cell num" style="left:548px;top:426px;width:60px;text-align:right;padding-right:3px;color:#000">1,000</div><div class="cell num" style="left:609px;top:426px;width:110px;text-align:right;padding-right:3px;color:#000">49,10</div><div class="cell num" style="left:771px;top:426px;width:96px;text-align:right;padding-right:3px;color:#000">49,10</div><div class="cell num" style="left:868px;top:426px;width:100px;text-align:right;padding-right:3px;color:#000">47,63</div><div class="cell up" style="left:969px;top:426px;width:30px;padding-left:1px;color:#000"><span class="sx">N</span></div><div class="cell num" style="left:1000px;top:426px;width:71px;padding-left:1px;color:#000">1018109774</div><div class="cell num" style="left:1072px;top:426px;width:101px;padding-left:1px;color:#000">17.2.2016</div><div class="a" style="left:24px;top:443px;width:22px;height:17px"><svg width="22" height="17" shape-rendering="crispEdges"><use href="#fold"/></svg></div><div class="cell num" style="left:48px;top:444px;width:25px;text-align:right;padding-right:3px;color:#fff">16</div><div class="cell up" style="left:74px;top:444px;width:129px;padding-left:1px;color:#fff"><span class="sx">ROČNA ORODJA,Z VDELANIM</span></div><div class="cell up" style="left:204px;top:444px;width:30px;padding-left:1px;color:#fff"><span class="sx">HU</span></div><div class="cell up" style="left:235px;top:444px;width:30px;padding-left:1px;color:#fff"><span class="sx">DE</span></div><div class="cell num" style="left:266px;top:444px;width:35px;text-align:right;padding-right:3px;color:#fff">1</div><div class="cell up" style="left:302px;top:444px;width:40px;padding-left:1px;color:#fff"><span class="sx">DAP</span></div><div class="cell num" style="left:343px;top:444px;width:20px;text-align:right;padding-right:3px;color:#fff">11</div><div class="cell num" style="left:364px;top:444px;width:20px;text-align:right;padding-right:3px;color:#fff">3</div><div class="cell num" style="left:385px;top:444px;width:60px;padding-left:1px;color:#fff">84672191</div><div class="cell num" style="left:477px;top:444px;width:70px;text-align:right;padding-right:3px;color:#fff">6,500</div><div class="cell num" style="left:548px;top:444px;width:60px;text-align:right;padding-right:3px;color:#fff">1,000</div><div class="cell num" style="left:609px;top:444px;width:110px;text-align:right;padding-right:3px;color:#fff">157,61</div><div class="cell num" style="left:771px;top:444px;width:96px;text-align:right;padding-right:3px;color:#fff">157,61</div><div class="cell num" style="left:868px;top:444px;width:100px;text-align:right;padding-right:3px;color:#fff">152,88</div><div class="cell up" style="left:969px;top:444px;width:30px;padding-left:1px;color:#fff"><span class="sx">N</span></div><div class="cell num" style="left:1000px;top:444px;width:71px;padding-left:1px;color:#fff">1018109774</div><div class="cell num" style="left:1072px;top:444px;width:101px;padding-left:1px;color:#fff">17.2.2016</div><div class="a" style="left:24px;top:461px;width:22px;height:17px"><svg width="22" height="17" shape-rendering="crispEdges"><use href="#fold"/></svg></div><div class="cell num" style="left:48px;top:462px;width:25px;text-align:right;padding-right:3px;color:#000">17</div><div class="cell up" style="left:74px;top:462px;width:129px;padding-left:1px;color:#000"><span class="sx">ROČNA ORODJA,Z VDELANIM</span></div><div class="cell up" style="left:204px;top:462px;width:30px;padding-left:1px;color:#000"><span class="sx">HU</span></div><div class="cell up" style="left:235px;top:462px;width:30px;padding-left:1px;color:#000"><span class="sx">RU</span></div><div class="cell num" style="left:266px;top:462px;width:35px;text-align:right;padding-right:3px;color:#000">1</div><div class="cell up" style="left:302px;top:462px;width:40px;padding-left:1px;color:#000"><span class="sx">DAP</span></div><div class="cell num" style="left:343px;top:462px;width:20px;text-align:right;padding-right:3px;color:#000">11</div><div class="cell num" style="left:364px;top:462px;width:20px;text-align:right;padding-right:3px;color:#000">3</div><div class="cell num" style="left:385px;top:462px;width:60px;padding-left:1px;color:#000">84672951</div><div class="cell num" style="left:477px;top:462px;width:70px;text-align:right;padding-right:3px;color:#000">7,000</div><div class="cell num" style="left:548px;top:462px;width:60px;text-align:right;padding-right:3px;color:#000">1,000</div><div class="cell num" style="left:609px;top:462px;width:110px;text-align:right;padding-right:3px;color:#000">157,16</div><div class="cell num" style="left:771px;top:462px;width:96px;text-align:right;padding-right:3px;color:#000">157,16</div><div class="cell num" style="left:868px;top:462px;width:100px;text-align:right;padding-right:3px;color:#000">152,45</div><div class="cell up" style="left:969px;top:462px;width:30px;padding-left:1px;color:#000"><span class="sx">N</span></div><div class="cell num" style="left:1000px;top:462px;width:71px;padding-left:1px;color:#000">1018109774</div><div class="cell num" style="left:1072px;top:462px;width:101px;padding-left:1px;color:#000">17.2.2016</div><div class="a" style="left:24px;top:479px;width:22px;height:17px"><svg width="22" height="17" shape-rendering="crispEdges"><use href="#fold"/></svg></div><div class="cell num" style="left:48px;top:480px;width:25px;text-align:right;padding-right:3px;color:#000">18</div><div class="cell lo" style="left:74px;top:480px;width:129px;padding-left:1px;color:#000">Ročna orodja, z vdelanim elektro</div><div class="cell up" style="left:204px;top:480px;width:30px;padding-left:1px;color:#000"><span class="sx">HU</span></div><div class="cell up" style="left:235px;top:480px;width:30px;padding-left:1px;color:#000"><span class="sx">CN</span></div><div class="cell num" style="left:266px;top:480px;width:35px;text-align:right;padding-right:3px;color:#000">1</div><div class="cell up" style="left:302px;top:480px;width:40px;padding-left:1px;color:#000"><span class="sx">DAP</span></div><div class="cell num" style="left:343px;top:480px;width:20px;text-align:right;padding-right:3px;color:#000">11</div><div class="cell num" style="left:364px;top:480px;width:20px;text-align:right;padding-right:3px;color:#000">3</div><div class="cell num" style="left:385px;top:480px;width:60px;padding-left:1px;color:#000">84672985</div><div class="cell num" style="left:477px;top:480px;width:70px;text-align:right;padding-right:3px;color:#000">3,199</div><div class="cell num" style="left:548px;top:480px;width:60px;text-align:right;padding-right:3px;color:#000">1,000</div><div class="cell num" style="left:609px;top:480px;width:110px;text-align:right;padding-right:3px;color:#000">54,64</div><div class="cell num" style="left:771px;top:480px;width:96px;text-align:right;padding-right:3px;color:#000">54,64</div><div class="cell num" style="left:868px;top:480px;width:100px;text-align:right;padding-right:3px;color:#000">53,00</div><div class="cell up" style="left:969px;top:480px;width:30px;padding-left:1px;color:#000"><span class="sx">N</span></div><div class="cell num" style="left:1000px;top:480px;width:71px;padding-left:1px;color:#000">1018109774</div><div class="cell num" style="left:1072px;top:480px;width:101px;padding-left:1px;color:#000">17.2.2016</div><div class="a" style="left:24px;top:497px;width:22px;height:17px"><svg width="22" height="17" shape-rendering="crispEdges"><use href="#fold"/></svg></div><div class="cell num" style="left:48px;top:498px;width:25px;text-align:right;padding-right:3px;color:#000">19</div><div class="cell up" style="left:74px;top:498px;width:129px;padding-left:1px;color:#000"><span class="sx">ROČNA ORODJA,Z VDELANIM</span></div><div class="cell up" style="left:204px;top:498px;width:30px;padding-left:1px;color:#000"><span class="sx">HU</span></div><div class="cell up" style="left:235px;top:498px;width:30px;padding-left:1px;color:#000"><span class="sx">MY</span></div><div class="cell num" style="left:266px;top:498px;width:35px;text-align:right;padding-right:3px;color:#000">1</div><div class="cell up" style="left:302px;top:498px;width:40px;padding-left:1px;color:#000"><span class="sx">DAP</span></div><div class="cell num" style="left:343px;top:498px;width:20px;text-align:right;padding-right:3px;color:#000">11</div><div class="cell num" style="left:364px;top:498px;width:20px;text-align:right;padding-right:3px;color:#000">3</div><div class="cell num" style="left:385px;top:498px;width:60px;padding-left:1px;color:#000">84672199</div><div class="cell num" style="left:477px;top:498px;width:70px;text-align:right;padding-right:3px;color:#000">13,130</div><div class="cell num" style="left:548px;top:498px;width:60px;text-align:right;padding-right:3px;color:#000">5,000</div><div class="cell num" style="left:609px;top:498px;width:110px;text-align:right;padding-right:3px;color:#000">339,95</div><div class="cell num" style="left:771px;top:498px;width:96px;text-align:right;padding-right:3px;color:#000">339,95</div><div class="cell num" style="left:868px;top:498px;width:100px;text-align:right;padding-right:3px;color:#000">329,75</div><div class="cell up" style="left:969px;top:498px;width:30px;padding-left:1px;color:#000"><span class="sx">N</span></div><div class="cell num" style="left:1000px;top:498px;width:71px;padding-left:1px;color:#000">1018109774</div><div class="cell num" style="left:1072px;top:498px;width:101px;padding-left:1px;color:#000">17.2.2016</div><div class="a" style="left:24px;top:515px;width:22px;height:17px"><svg width="22" height="17" shape-rendering="crispEdges"><use href="#fold"/></svg></div><div class="cell num" style="left:48px;top:516px;width:25px;text-align:right;padding-right:3px;color:#000">20</div><div class="cell up" style="left:74px;top:516px;width:129px;padding-left:1px;color:#000"><span class="sx">IZDELKI, ŽELEZNI ALI JEKLENI</span></div><div class="cell up" style="left:204px;top:516px;width:30px;padding-left:1px;color:#000"><span class="sx">HU</span></div><div class="cell up" style="left:235px;top:516px;width:30px;padding-left:1px;color:#000"><span class="sx">CN</span></div><div class="cell num" style="left:266px;top:516px;width:35px;text-align:right;padding-right:3px;color:#000">1</div><div class="cell up" style="left:302px;top:516px;width:40px;padding-left:1px;color:#000"><span class="sx">DAP</span></div><div class="cell num" style="left:343px;top:516px;width:20px;text-align:right;padding-right:3px;color:#000">11</div><div class="cell num" style="left:364px;top:516px;width:20px;text-align:right;padding-right:3px;color:#000">3</div><div class="cell num" style="left:385px;top:516px;width:60px;padding-left:1px;color:#000">73269098</div><div class="cell num" style="left:477px;top:516px;width:70px;text-align:right;padding-right:3px;color:#000">11,400</div><div class="cell num" style="left:609px;top:516px;width:110px;text-align:right;padding-right:3px;color:#000">51,36</div><div class="cell num" style="left:771px;top:516px;width:96px;text-align:right;padding-right:3px;color:#000">51,36</div><div class="cell num" style="left:868px;top:516px;width:100px;text-align:right;padding-right:3px;color:#000">49,82</div><div class="cell up" style="left:969px;top:516px;width:30px;padding-left:1px;color:#000"><span class="sx">N</span></div><div class="cell num" style="left:1000px;top:516px;width:71px;padding-left:1px;color:#000">1018109774</div><div class="cell num" style="left:1072px;top:516px;width:101px;padding-left:1px;color:#000">17.2.2016</div><div class="a" style="left:24px;top:533px;width:22px;height:17px"><svg width="22" height="17" shape-rendering="crispEdges"><use href="#fold"/></svg></div><div class="cell num" style="left:48px;top:534px;width:25px;text-align:right;padding-right:3px;color:#000">21</div><div class="cell up" style="left:74px;top:534px;width:129px;padding-left:1px;color:#000"><span class="sx">SESALNIKI ZA PRAH, Z VDELANIM</span></div><div class="cell up" style="left:204px;top:534px;width:30px;padding-left:1px;color:#000"><span class="sx">HU</span></div><div class="cell up" style="left:235px;top:534px;width:30px;padding-left:1px;color:#000"><span class="sx">IT</span></div><div class="cell num" style="left:266px;top:534px;width:35px;text-align:right;padding-right:3px;color:#000">1</div><div class="cell up" style="left:302px;top:534px;width:40px;padding-left:1px;color:#000"><span class="sx">DAP</span></div><div class="cell num" style="left:343px;top:534px;width:20px;text-align:right;padding-right:3px;color:#000">11</div><div class="cell num" style="left:364px;top:534px;width:20px;text-align:right;padding-right:3px;color:#000">3</div><div class="cell num" style="left:385px;top:534px;width:60px;padding-left:1px;color:#000">85081900</div><div class="cell num" style="left:477px;top:534px;width:70px;text-align:right;padding-right:3px;color:#000">12,200</div><div class="cell num" style="left:548px;top:534px;width:60px;text-align:right;padding-right:3px;color:#000">1,000</div><div class="cell num" style="left:609px;top:534px;width:110px;text-align:right;padding-right:3px;color:#000">306,90</div><div class="cell num" style="left:771px;top:534px;width:96px;text-align:right;padding-right:3px;color:#000">306,90</div><div class="cell num" style="left:868px;top:534px;width:100px;text-align:right;padding-right:3px;color:#000">297,69</div><div class="cell up" style="left:969px;top:534px;width:30px;padding-left:1px;color:#000"><span class="sx">N</span></div><div class="cell num" style="left:1000px;top:534px;width:71px;padding-left:1px;color:#000">1018109774</div><div class="cell num" style="left:1072px;top:534px;width:101px;padding-left:1px;color:#000">17.2.2016</div><div class="a" style="left:24px;top:551px;width:22px;height:17px"><svg width="22" height="17" shape-rendering="crispEdges"><use href="#fold"/></svg></div><div class="cell num" style="left:48px;top:552px;width:25px;text-align:right;padding-right:3px;color:#000">22</div><div class="cell lo" style="left:74px;top:552px;width:129px;padding-left:1px;color:#000">Ročna orodja, z vdelanim elektro</div><div class="cell up" style="left:204px;top:552px;width:30px;padding-left:1px;color:#000"><span class="sx">HU</span></div><div class="cell up" style="left:235px;top:552px;width:30px;padding-left:1px;color:#000"><span class="sx">HU</span></div><div class="cell num" style="left:266px;top:552px;width:35px;text-align:right;padding-right:3px;color:#000">1</div><div class="cell up" style="left:302px;top:552px;width:40px;padding-left:1px;color:#000"><span class="sx">DAP</span></div><div class="cell num" style="left:343px;top:552px;width:20px;text-align:right;padding-right:3px;color:#000">11</div><div class="cell num" style="left:364px;top:552px;width:20px;text-align:right;padding-right:3px;color:#000">3</div><div class="cell num" style="left:385px;top:552px;width:60px;padding-left:1px;color:#000">84672920</div><div class="cell num" style="left:477px;top:552px;width:70px;text-align:right;padding-right:3px;color:#000">0,528</div><div class="cell num" style="left:548px;top:552px;width:60px;text-align:right;padding-right:3px;color:#000">1,000</div><div class="cell num" style="left:609px;top:552px;width:110px;text-align:right;padding-right:3px;color:#000">35,96</div><div class="cell num" style="left:771px;top:552px;width:96px;text-align:right;padding-right:3px;color:#000">35,96</div><div class="cell num" style="left:868px;top:552px;width:100px;text-align:right;padding-right:3px;color:#000">34,88</div><div class="cell up" style="left:969px;top:552px;width:30px;padding-left:1px;color:#000"><span class="sx">N</span></div><div class="cell num" style="left:1000px;top:552px;width:71px;padding-left:1px;color:#000">1018109774</div><div class="cell num" style="left:1072px;top:552px;width:101px;padding-left:1px;color:#000">17.2.2016</div><div class="a" style="left:24px;top:569px;width:22px;height:17px"><svg width="22" height="17" shape-rendering="crispEdges"><use href="#fold"/></svg></div><div class="cell num" style="left:48px;top:570px;width:25px;text-align:right;padding-right:3px;color:#000">23</div><div class="cell up" style="left:74px;top:570px;width:129px;padding-left:1px;color:#000"><span class="sx">ROČNA ORODJA,Z VDELANIM</span></div><div class="cell up" style="left:204px;top:570px;width:30px;padding-left:1px;color:#000"><span class="sx">HU</span></div><div class="cell up" style="left:235px;top:570px;width:30px;padding-left:1px;color:#000"><span class="sx">CN</span></div><div class="cell num" style="left:266px;top:570px;width:35px;text-align:right;padding-right:3px;color:#000">1</div><div class="cell up" style="left:302px;top:570px;width:40px;padding-left:1px;color:#000"><span class="sx">DAP</span></div><div class="cell num" style="left:343px;top:570px;width:20px;text-align:right;padding-right:3px;color:#000">11</div><div class="cell num" style="left:364px;top:570px;width:20px;text-align:right;padding-right:3px;color:#000">3</div><div class="cell num" style="left:385px;top:570px;width:60px;padding-left:1px;color:#000">84672290</div><div class="cell num" style="left:477px;top:570px;width:70px;text-align:right;padding-right:3px;color:#000">3,200</div><div class="cell num" style="left:548px;top:570px;width:60px;text-align:right;padding-right:3px;color:#000">1,000</div><div class="cell num" style="left:609px;top:570px;width:110px;text-align:right;padding-right:3px;color:#000">51,38</div><div class="cell num" style="left:771px;top:570px;width:96px;text-align:right;padding-right:3px;color:#000">51,38</div><div class="cell num" style="left:868px;top:570px;width:100px;text-align:right;padding-right:3px;color:#000">49,84</div><div class="cell up" style="left:969px;top:570px;width:30px;padding-left:1px;color:#000"><span class="sx">N</span></div><div class="cell num" style="left:1000px;top:570px;width:71px;padding-left:1px;color:#000">1018109774</div><div class="cell num" style="left:1072px;top:570px;width:101px;padding-left:1px;color:#000">17.2.2016</div><div class="a" style="left:24px;top:587px;width:22px;height:17px"><svg width="22" height="17" shape-rendering="crispEdges"><use href="#fold"/></svg></div><div class="cell num" style="left:48px;top:588px;width:25px;text-align:right;padding-right:3px;color:#000">24</div><div class="cell up" style="left:74px;top:588px;width:129px;padding-left:1px;color:#000"><span class="sx">ROČNE PLAMENKE NA PLIN</span></div><div class="cell up" style="left:204px;top:588px;width:30px;padding-left:1px;color:#000"><span class="sx">HU</span></div><div class="cell up" style="left:235px;top:588px;width:30px;padding-left:1px;color:#000"><span class="sx">TW</span></div><div class="cell num" style="left:266px;top:588px;width:35px;text-align:right;padding-right:3px;color:#000">1</div><div class="cell up" style="left:302px;top:588px;width:40px;padding-left:1px;color:#000"><span class="sx">DAP</span></div><div class="cell num" style="left:343px;top:588px;width:20px;text-align:right;padding-right:3px;color:#000">11</div><div class="cell num" style="left:364px;top:588px;width:20px;text-align:right;padding-right:3px;color:#000">3</div><div class="cell num" style="left:385px;top:588px;width:60px;padding-left:1px;color:#000">84681000</div><div class="cell num" style="left:477px;top:588px;width:70px;text-align:right;padding-right:3px;color:#000">0,135</div><div class="cell num" style="left:609px;top:588px;width:110px;text-align:right;padding-right:3px;color:#000">20,08</div><div class="cell num" style="left:771px;top:588px;width:96px;text-align:right;padding-right:3px;color:#000">20,08</div><div class="cell num" style="left:868px;top:588px;width:100px;text-align:right;padding-right:3px;color:#000">19,48</div><div class="cell up" style="left:969px;top:588px;width:30px;padding-left:1px;color:#000"><span class="sx">N</span></div><div class="cell num" style="left:1000px;top:588px;width:71px;padding-left:1px;color:#000">1018109774</div><div class="cell num" style="left:1072px;top:588px;width:101px;padding-left:1px;color:#000">17.2.2016</div><div class="a" style="left:24px;top:605px;width:22px;height:17px"><svg width="22" height="17" shape-rendering="crispEdges"><use href="#fold"/></svg></div><div class="cell num" style="left:48px;top:606px;width:25px;text-align:right;padding-right:3px;color:#000">25</div><div class="cell up" style="left:74px;top:606px;width:129px;padding-left:1px;color:#000"><span class="sx">DRUGO ROČNO ORODJE (VKLJ</span></div><div class="cell up" style="left:204px;top:606px;width:30px;padding-left:1px;color:#000"><span class="sx">HU</span></div><div class="cell up" style="left:235px;top:606px;width:30px;padding-left:1px;color:#000"><span class="sx">RO</span></div><div class="cell num" style="left:266px;top:606px;width:35px;text-align:right;padding-right:3px;color:#000">1</div><div class="cell up" style="left:302px;top:606px;width:40px;padding-left:1px;color:#000"><span class="sx">DAP</span></div><div class="cell num" style="left:343px;top:606px;width:20px;text-align:right;padding-right:3px;color:#000">11</div><div class="cell num" style="left:364px;top:606px;width:20px;text-align:right;padding-right:3px;color:#000">3</div><div class="cell num" style="left:385px;top:606px;width:60px;padding-left:1px;color:#000">82055980</div><div class="cell num" style="left:477px;top:606px;width:70px;text-align:right;padding-right:3px;color:#000">0,142</div><div class="cell num" style="left:609px;top:606px;width:110px;text-align:right;padding-right:3px;color:#000">20,78</div><div class="cell num" style="left:771px;top:606px;width:96px;text-align:right;padding-right:3px;color:#000">20,78</div><div class="cell num" style="left:868px;top:606px;width:100px;text-align:right;padding-right:3px;color:#000">20,16</div><div class="cell up" style="left:969px;top:606px;width:30px;padding-left:1px;color:#000"><span class="sx">N</span></div><div class="cell num" style="left:1000px;top:606px;width:71px;padding-left:1px;color:#000">1018109774</div><div class="cell num" style="left:1072px;top:606px;width:101px;padding-left:1px;color:#000">17.2.2016</div><div class="a" style="left:24px;top:623px;width:22px;height:17px"><svg width="22" height="17" shape-rendering="crispEdges"><use href="#fold"/></svg></div><div class="cell num" style="left:48px;top:624px;width:25px;text-align:right;padding-right:3px;color:#000">26</div><div class="cell up" style="left:74px;top:624px;width:129px;padding-left:1px;color:#000"><span class="sx">ROČNE PLAMENKE NA PLIN</span></div><div class="cell up" style="left:204px;top:624px;width:30px;padding-left:1px;color:#000"><span class="sx">HU</span></div><div class="cell up" style="left:235px;top:624px;width:30px;padding-left:1px;color:#000"><span class="sx">TW</span></div><div class="cell num" style="left:266px;top:624px;width:35px;text-align:right;padding-right:3px;color:#000">1</div><div class="cell up" style="left:302px;top:624px;width:40px;padding-left:1px;color:#000"><span class="sx">DAP</span></div><div class="cell num" style="left:343px;top:624px;width:20px;text-align:right;padding-right:3px;color:#000">11</div><div class="cell num" style="left:364px;top:624px;width:20px;text-align:right;padding-right:3px;color:#000">3</div><div class="cell num" style="left:385px;top:624px;width:60px;padding-left:1px;color:#000">84681000</div><div class="cell num" style="left:477px;top:624px;width:70px;text-align:right;padding-right:3px;color:#000">0,135</div><div class="cell num" style="left:609px;top:624px;width:110px;text-align:right;padding-right:3px;color:#000">20,08</div><div class="cell num" style="left:771px;top:624px;width:96px;text-align:right;padding-right:3px;color:#000">20,08</div><div class="cell num" style="left:868px;top:624px;width:100px;text-align:right;padding-right:3px;color:#000">19,48</div><div class="cell up" style="left:969px;top:624px;width:30px;padding-left:1px;color:#000"><span class="sx">N</span></div><div class="cell num" style="left:1000px;top:624px;width:71px;padding-left:1px;color:#000">1018109774</div><div class="cell num" style="left:1072px;top:624px;width:101px;padding-left:1px;color:#000">17.2.2016</div><div class="a" style="left:24px;top:641px;width:22px;height:17px"><svg width="22" height="17" shape-rendering="crispEdges"><use href="#fold"/></svg></div><div class="cell num" style="left:48px;top:642px;width:25px;text-align:right;padding-right:3px;color:#000">27</div><div class="cell up" style="left:74px;top:642px;width:129px;padding-left:1px;color:#000"><span class="sx">ROČNA ORODJA,Z VDELANIM</span></div><div class="cell up" style="left:204px;top:642px;width:30px;padding-left:1px;color:#000"><span class="sx">HU</span></div><div class="cell up" style="left:235px;top:642px;width:30px;padding-left:1px;color:#000"><span class="sx">DE</span></div><div class="cell num" style="left:266px;top:642px;width:35px;text-align:right;padding-right:3px;color:#000">1</div><div class="cell up" style="left:302px;top:642px;width:40px;padding-left:1px;color:#000"><span class="sx">DAP</span></div><div class="cell num" style="left:343px;top:642px;width:20px;text-align:right;padding-right:3px;color:#000">11</div><div class="cell num" style="left:364px;top:642px;width:20px;text-align:right;padding-right:3px;color:#000">3</div><div class="cell num" style="left:385px;top:642px;width:60px;padding-left:1px;color:#000">84672191</div><div class="cell num" style="left:477px;top:642px;width:70px;text-align:right;padding-right:3px;color:#000">16,000</div><div class="cell num" style="left:548px;top:642px;width:60px;text-align:right;padding-right:3px;color:#000">1,000</div><div class="cell num" style="left:609px;top:642px;width:110px;text-align:right;padding-right:3px;color:#000">501,09</div><div class="cell num" style="left:771px;top:642px;width:96px;text-align:right;padding-right:3px;color:#000">501,09</div><div class="cell num" style="left:868px;top:642px;width:100px;text-align:right;padding-right:3px;color:#000">486,06</div><div class="cell up" style="left:969px;top:642px;width:30px;padding-left:1px;color:#000"><span class="sx">N</span></div><div class="cell num" style="left:1000px;top:642px;width:71px;padding-left:1px;color:#000">1018109774</div><div class="cell num" style="left:1072px;top:642px;width:101px;padding-left:1px;color:#000">17.2.2016</div><div class="a" style="left:24px;top:659px;width:22px;height:17px"><svg width="22" height="17" shape-rendering="crispEdges"><use href="#fold"/></svg></div><div class="cell num" style="left:48px;top:660px;width:25px;text-align:right;padding-right:3px;color:#000">28</div><div class="cell up" style="left:74px;top:660px;width:129px;padding-left:1px;color:#000"><span class="sx">DELI ROČNEGA ORODJA, Z</span></div><div class="cell up" style="left:204px;top:660px;width:30px;padding-left:1px;color:#000"><span class="sx">HU</span></div><div class="cell up" style="left:235px;top:660px;width:30px;padding-left:1px;color:#000"><span class="sx">CZ</span></div><div class="cell num" style="left:266px;top:660px;width:35px;text-align:right;padding-right:3px;color:#000">1</div><div class="cell up" style="left:302px;top:660px;width:40px;padding-left:1px;color:#000"><span class="sx">DAP</span></div><div class="cell num" style="left:343px;top:660px;width:20px;text-align:right;padding-right:3px;color:#000">11</div><div class="cell num" style="left:364px;top:660px;width:20px;text-align:right;padding-right:3px;color:#000">3</div><div class="cell num" style="left:385px;top:660px;width:60px;padding-left:1px;color:#000">84679900</div><div class="cell num" style="left:477px;top:660px;width:70px;text-align:right;padding-right:3px;color:#000">0,155</div><div class="cell num" style="left:609px;top:660px;width:110px;text-align:right;padding-right:3px;color:#000">9,84</div><div class="cell num" style="left:771px;top:660px;width:96px;text-align:right;padding-right:3px;color:#000">9,84</div><div class="cell num" style="left:868px;top:660px;width:100px;text-align:right;padding-right:3px;color:#000">9,54</div><div class="cell up" style="left:969px;top:660px;width:30px;padding-left:1px;color:#000"><span class="sx">N</span></div><div class="cell num" style="left:1000px;top:660px;width:71px;padding-left:1px;color:#000">1018109774</div><div class="cell num" style="left:1072px;top:660px;width:101px;padding-left:1px;color:#000">17.2.2016</div><div class="a" style="left:24px;top:677px;width:22px;height:17px"><svg width="22" height="17" shape-rendering="crispEdges"><use href="#fold"/></svg></div><div class="cell num" style="left:48px;top:678px;width:25px;text-align:right;padding-right:3px;color:#000">29</div><div class="cell up" style="left:74px;top:678px;width:129px;padding-left:1px;color:#000"><span class="sx">KOSILNICE ZA TRAVO,Z RO</span></div><div class="cell up" style="left:204px;top:678px;width:30px;padding-left:1px;color:#000"><span class="sx">HU</span></div><div class="cell up" style="left:235px;top:678px;width:30px;padding-left:1px;color:#000"><span class="sx">GB</span></div><div class="cell num" style="left:266px;top:678px;width:35px;text-align:right;padding-right:3px;color:#000">1</div><div class="cell up" style="left:302px;top:678px;width:40px;padding-left:1px;color:#000"><span class="sx">DAP</span></div><div class="cell num" style="left:343px;top:678px;width:20px;text-align:right;padding-right:3px;color:#000">11</div><div class="cell num" style="left:364px;top:678px;width:20px;text-align:right;padding-right:3px;color:#000">3</div><div class="cell num" style="left:385px;top:678px;width:60px;padding-left:1px;color:#000">84331110</div><div class="cell num" style="left:477px;top:678px;width:70px;text-align:right;padding-right:3px;color:#000">11,100</div><div class="cell num" style="left:548px;top:678px;width:60px;text-align:right;padding-right:3px;color:#000">1,000</div><div class="cell num" style="left:609px;top:678px;width:110px;text-align:right;padding-right:3px;color:#000">722,95</div><div class="cell num" style="left:771px;top:678px;width:96px;text-align:right;padding-right:3px;color:#000">722,95</div><div class="cell num" style="left:868px;top:678px;width:100px;text-align:right;padding-right:3px;color:#000">701,26</div><div class="cell up" style="left:969px;top:678px;width:30px;padding-left:1px;color:#000"><span class="sx">N</span></div><div class="cell num" style="left:1000px;top:678px;width:71px;padding-left:1px;color:#000">1018109774</div><div class="cell num" style="left:1072px;top:678px;width:101px;padding-left:1px;color:#000">17.2.2016</div><div class="a" style="left:24px;top:695px;width:22px;height:17px"><svg width="22" height="17" shape-rendering="crispEdges"><use href="#fold"/></svg></div><div class="cell num" style="left:48px;top:696px;width:25px;text-align:right;padding-right:3px;color:#000">30</div><div class="cell up" style="left:74px;top:696px;width:129px;padding-left:1px;color:#000"><span class="sx">DELI ROČNEGA ORODJA, Z</span></div><div class="cell up" style="left:204px;top:696px;width:30px;padding-left:1px;color:#000"><span class="sx">HU</span></div><div class="cell up" style="left:235px;top:696px;width:30px;padding-left:1px;color:#000"><span class="sx">TW</span></div><div class="cell num" style="left:266px;top:696px;width:35px;text-align:right;padding-right:3px;color:#000">1</div><div class="cell up" style="left:302px;top:696px;width:40px;padding-left:1px;color:#000"><span class="sx">DAP</span></div><div class="cell num" style="left:343px;top:696px;width:20px;text-align:right;padding-right:3px;color:#000">11</div><div class="cell num" style="left:364px;top:696px;width:20px;text-align:right;padding-right:3px;color:#000">3</div><div class="cell num" style="left:385px;top:696px;width:60px;padding-left:1px;color:#000">84679900</div><div class="cell num" style="left:477px;top:696px;width:70px;text-align:right;padding-right:3px;color:#000">0,920</div><div class="cell num" style="left:609px;top:696px;width:110px;text-align:right;padding-right:3px;color:#000">65,45</div><div class="cell num" style="left:771px;top:696px;width:96px;text-align:right;padding-right:3px;color:#000">65,45</div><div class="cell num" style="left:868px;top:696px;width:100px;text-align:right;padding-right:3px;color:#000">63,49</div><div class="cell up" style="left:969px;top:696px;width:30px;padding-left:1px;color:#000"><span class="sx">N</span></div><div class="cell num" style="left:1000px;top:696px;width:71px;padding-left:1px;color:#000">1018109774</div><div class="cell num" style="left:1072px;top:696px;width:101px;padding-left:1px;color:#000">17.2.2016</div><div class="a" style="left:24px;top:713px;width:22px;height:17px"><svg width="22" height="17" shape-rendering="crispEdges"><use href="#fold"/></svg></div><div class="cell num" style="left:48px;top:714px;width:25px;text-align:right;padding-right:3px;color:#000">31</div><div class="cell up" style="left:74px;top:714px;width:129px;padding-left:1px;color:#000"><span class="sx">ROČNA ORODJA,Z VDELANIM</span></div><div class="cell up" style="left:204px;top:714px;width:30px;padding-left:1px;color:#000"><span class="sx">HU</span></div><div class="cell up" style="left:235px;top:714px;width:30px;padding-left:1px;color:#000"><span class="sx">DE</span></div><div class="cell num" style="left:266px;top:714px;width:35px;text-align:right;padding-right:3px;color:#000">1</div><div class="cell up" style="left:302px;top:714px;width:40px;padding-left:1px;color:#000"><span class="sx">DAP</span></div><div class="cell num" style="left:343px;top:714px;width:20px;text-align:right;padding-right:3px;color:#000">11</div><div class="cell num" style="left:364px;top:714px;width:20px;text-align:right;padding-right:3px;color:#000">3</div><div class="cell num" style="left:385px;top:714px;width:60px;padding-left:1px;color:#000">84672199</div><div class="cell num" style="left:477px;top:714px;width:70px;text-align:right;padding-right:3px;color:#000">4,800</div><div class="cell num" style="left:548px;top:714px;width:60px;text-align:right;padding-right:3px;color:#000">1,000</div><div class="cell num" style="left:609px;top:714px;width:110px;text-align:right;padding-right:3px;color:#000">319,92</div><div class="cell num" style="left:771px;top:714px;width:96px;text-align:right;padding-right:3px;color:#000">319,92</div><div class="cell num" style="left:868px;top:714px;width:100px;text-align:right;padding-right:3px;color:#000">310,32</div><div class="cell up" style="left:969px;top:714px;width:30px;padding-left:1px;color:#000"><span class="sx">N</span></div><div class="cell num" style="left:1000px;top:714px;width:71px;padding-left:1px;color:#000">1018109774</div><div class="cell num" style="left:1072px;top:714px;width:101px;padding-left:1px;color:#000">17.2.2016</div><div class="a" style="left:24px;top:731px;width:22px;height:17px"><svg width="22" height="17" shape-rendering="crispEdges"><use href="#fold"/></svg></div><div class="cell num" style="left:48px;top:732px;width:25px;text-align:right;padding-right:3px;color:#000">32</div><div class="cell up" style="left:74px;top:732px;width:129px;padding-left:1px;color:#000"><span class="sx">ORODJE ZA VRTANJE KOVIN</span></div><div class="cell up" style="left:204px;top:732px;width:30px;padding-left:1px;color:#000"><span class="sx">HU</span></div><div class="cell up" style="left:235px;top:732px;width:30px;padding-left:1px;color:#000"><span class="sx">CN</span></div><div class="cell num" style="left:266px;top:732px;width:35px;text-align:right;padding-right:3px;color:#000">1</div><div class="cell up" style="left:302px;top:732px;width:40px;padding-left:1px;color:#000"><span class="sx">DAP</span></div><div class="cell num" style="left:343px;top:732px;width:20px;text-align:right;padding-right:3px;color:#000">11</div><div class="cell num" style="left:364px;top:732px;width:20px;text-align:right;padding-right:3px;color:#000">3</div><div class="cell num" style="left:385px;top:732px;width:60px;padding-left:1px;color:#000">82075060</div><div class="cell num" style="left:477px;top:732px;width:70px;text-align:right;padding-right:3px;color:#000">0,124</div><div class="cell num" style="left:609px;top:732px;width:110px;text-align:right;padding-right:3px;color:#000">5,13</div><div class="cell num" style="left:771px;top:732px;width:96px;text-align:right;padding-right:3px;color:#000">5,13</div><div class="cell num" style="left:868px;top:732px;width:100px;text-align:right;padding-right:3px;color:#000">4,98</div><div class="cell up" style="left:969px;top:732px;width:30px;padding-left:1px;color:#000"><span class="sx">N</span></div><div class="cell num" style="left:1000px;top:732px;width:71px;padding-left:1px;color:#000">1018109774</div><div class="cell num" style="left:1072px;top:732px;width:101px;padding-left:1px;color:#000">17.2.2016</div><div class="a" style="left:24px;top:749px;width:22px;height:17px"><svg width="22" height="17" shape-rendering="crispEdges"><use href="#fold"/></svg></div><div class="cell num" style="left:48px;top:750px;width:25px;text-align:right;padding-right:3px;color:#000">33</div><div class="cell up" style="left:74px;top:750px;width:129px;padding-left:1px;color:#000"><span class="sx">ORODJE ZA VRTANJE KOVIN</span></div><div class="cell up" style="left:204px;top:750px;width:30px;padding-left:1px;color:#000"><span class="sx">HU</span></div><div class="cell up" style="left:235px;top:750px;width:30px;padding-left:1px;color:#000"><span class="sx">CN</span></div><div class="cell num" style="left:266px;top:750px;width:35px;text-align:right;padding-right:3px;color:#000">1</div><div class="cell up" style="left:302px;top:750px;width:40px;padding-left:1px;color:#000"><span class="sx">DAP</span></div><div class="cell num" style="left:343px;top:750px;width:20px;text-align:right;padding-right:3px;color:#000">11</div><div class="cell num" style="left:364px;top:750px;width:20px;text-align:right;padding-right:3px;color:#000">3</div><div class="cell num" style="left:385px;top:750px;width:60px;padding-left:1px;color:#000">82075060</div><div class="cell num" style="left:477px;top:750px;width:70px;text-align:right;padding-right:3px;color:#000">0,050</div><div class="cell num" style="left:609px;top:750px;width:110px;text-align:right;padding-right:3px;color:#000">1,97</div><div class="cell num" style="left:771px;top:750px;width:96px;text-align:right;padding-right:3px;color:#000">1,97</div><div class="cell num" style="left:868px;top:750px;width:100px;text-align:right;padding-right:3px;color:#000">1,91</div><div class="cell up" style="left:969px;top:750px;width:30px;padding-left:1px;color:#000"><span class="sx">N</span></div><div class="cell num" style="left:1000px;top:750px;width:71px;padding-left:1px;color:#000">1018109774</div><div class="cell num" style="left:1072px;top:750px;width:101px;padding-left:1px;color:#000">17.2.2016</div><div class="a" style="left:24px;top:767px;width:22px;height:17px"><svg width="22" height="17" shape-rendering="crispEdges"><use href="#fold"/></svg></div><div class="cell num" style="left:48px;top:768px;width:25px;text-align:right;padding-right:3px;color:#000">34</div><div class="cell up" style="left:74px;top:768px;width:129px;padding-left:1px;color:#000"><span class="sx">ORODJE ZA VRTANJE KOVIN</span></div><div class="cell up" style="left:204px;top:768px;width:30px;padding-left:1px;color:#000"><span class="sx">HU</span></div><div class="cell up" style="left:235px;top:768px;width:30px;padding-left:1px;color:#000"><span class="sx">CN</span></div><div class="cell num" style="left:266px;top:768px;width:35px;text-align:right;padding-right:3px;color:#000">1</div><div class="cell up" style="left:302px;top:768px;width:40px;padding-left:1px;color:#000"><span class="sx">DAP</span></div><div class="cell num" style="left:343px;top:768px;width:20px;text-align:right;padding-right:3px;color:#000">11</div><div class="cell num" style="left:364px;top:768px;width:20px;text-align:right;padding-right:3px;color:#000">3</div><div class="cell num" style="left:385px;top:768px;width:60px;padding-left:1px;color:#000">82075060</div><div class="cell num" style="left:477px;top:768px;width:70px;text-align:right;padding-right:3px;color:#000">0,030</div><div class="cell num" style="left:609px;top:768px;width:110px;text-align:right;padding-right:3px;color:#000">2,55</div><div class="cell num" style="left:771px;top:768px;width:96px;text-align:right;padding-right:3px;color:#000">2,55</div><div class="cell num" style="left:868px;top:768px;width:100px;text-align:right;padding-right:3px;color:#000">2,47</div><div class="cell up" style="left:969px;top:768px;width:30px;padding-left:1px;color:#000"><span class="sx">N</span></div><div class="cell num" style="left:1000px;top:768px;width:71px;padding-left:1px;color:#000">1018109774</div><div class="cell num" style="left:1072px;top:768px;width:101px;padding-left:1px;color:#000">17.2.2016</div><div class="a" style="left:24px;top:785px;width:22px;height:17px"><svg width="22" height="17" shape-rendering="crispEdges"><use href="#fold"/></svg></div><div class="cell num" style="left:48px;top:786px;width:25px;text-align:right;padding-right:3px;color:#000">35</div><div class="cell up" style="left:74px;top:786px;width:129px;padding-left:1px;color:#000"><span class="sx">ORODJE ZA VRTANJE KOVIN</span></div><div class="cell up" style="left:204px;top:786px;width:30px;padding-left:1px;color:#000"><span class="sx">HU</span></div><div class="cell up" style="left:235px;top:786px;width:30px;padding-left:1px;color:#000"><span class="sx">CN</span></div><div class="cell num" style="left:266px;top:786px;width:35px;text-align:right;padding-right:3px;color:#000">1</div><div class="cell up" style="left:302px;top:786px;width:40px;padding-left:1px;color:#000"><span class="sx">DAP</span></div><div class="cell num" style="left:343px;top:786px;width:20px;text-align:right;padding-right:3px;color:#000">11</div><div class="cell num" style="left:364px;top:786px;width:20px;text-align:right;padding-right:3px;color:#000">3</div><div class="cell num" style="left:385px;top:786px;width:60px;padding-left:1px;color:#000">82075060</div><div class="cell num" style="left:477px;top:786px;width:70px;text-align:right;padding-right:3px;color:#000">0,040</div><div class="cell num" style="left:609px;top:786px;width:110px;text-align:right;padding-right:3px;color:#000">3,01</div><div class="cell num" style="left:771px;top:786px;width:96px;text-align:right;padding-right:3px;color:#000">3,01</div><div class="cell num" style="left:868px;top:786px;width:100px;text-align:right;padding-right:3px;color:#000">2,92</div><div class="cell up" style="left:969px;top:786px;width:30px;padding-left:1px;color:#000"><span class="sx">N</span></div><div class="cell num" style="left:1000px;top:786px;width:71px;padding-left:1px;color:#000">1018109774</div><div class="cell num" style="left:1072px;top:786px;width:101px;padding-left:1px;color:#000">17.2.2016</div><div class="a" style="left:1183px;top:155px;width:16px;height:657px;background:#f0f0f0"></div><svg class="a" style="left:1186px;top:160px" width="9" height="8" viewBox="0 0 9 8"><path d="M1 6.5L4.5 2.5L8 6.5" fill="none" stroke="#505050" stroke-width="2"/></svg><div class="a" style="left:1183px;top:173px;width:15px;height:17px;background:#cdcdcd"></div><svg class="a" style="left:1186px;top:800px" width="9" height="8" viewBox="0 0 9 8"><path d="M1 1.5L4.5 5.5L8 1.5" fill="none" stroke="#505050" stroke-width="2"/></svg><div class="a" style="left:8px;top:816px;width:1193px;height:17px;background:#f0f0f0;border-top:1px solid #a0a0a0;border-left:1px solid #a0a0a0;border-bottom:1px solid #fff;border-right:1px solid #fff"></div><svg class="a" style="left:1187px;top:819px" width="12" height="12" viewBox="0 0 12 12"><path d="M11 1L1 11M11 5L5 11M11 9L9 11" stroke="#a0a0a0" stroke-width="1.2"/></svg></body></html>
